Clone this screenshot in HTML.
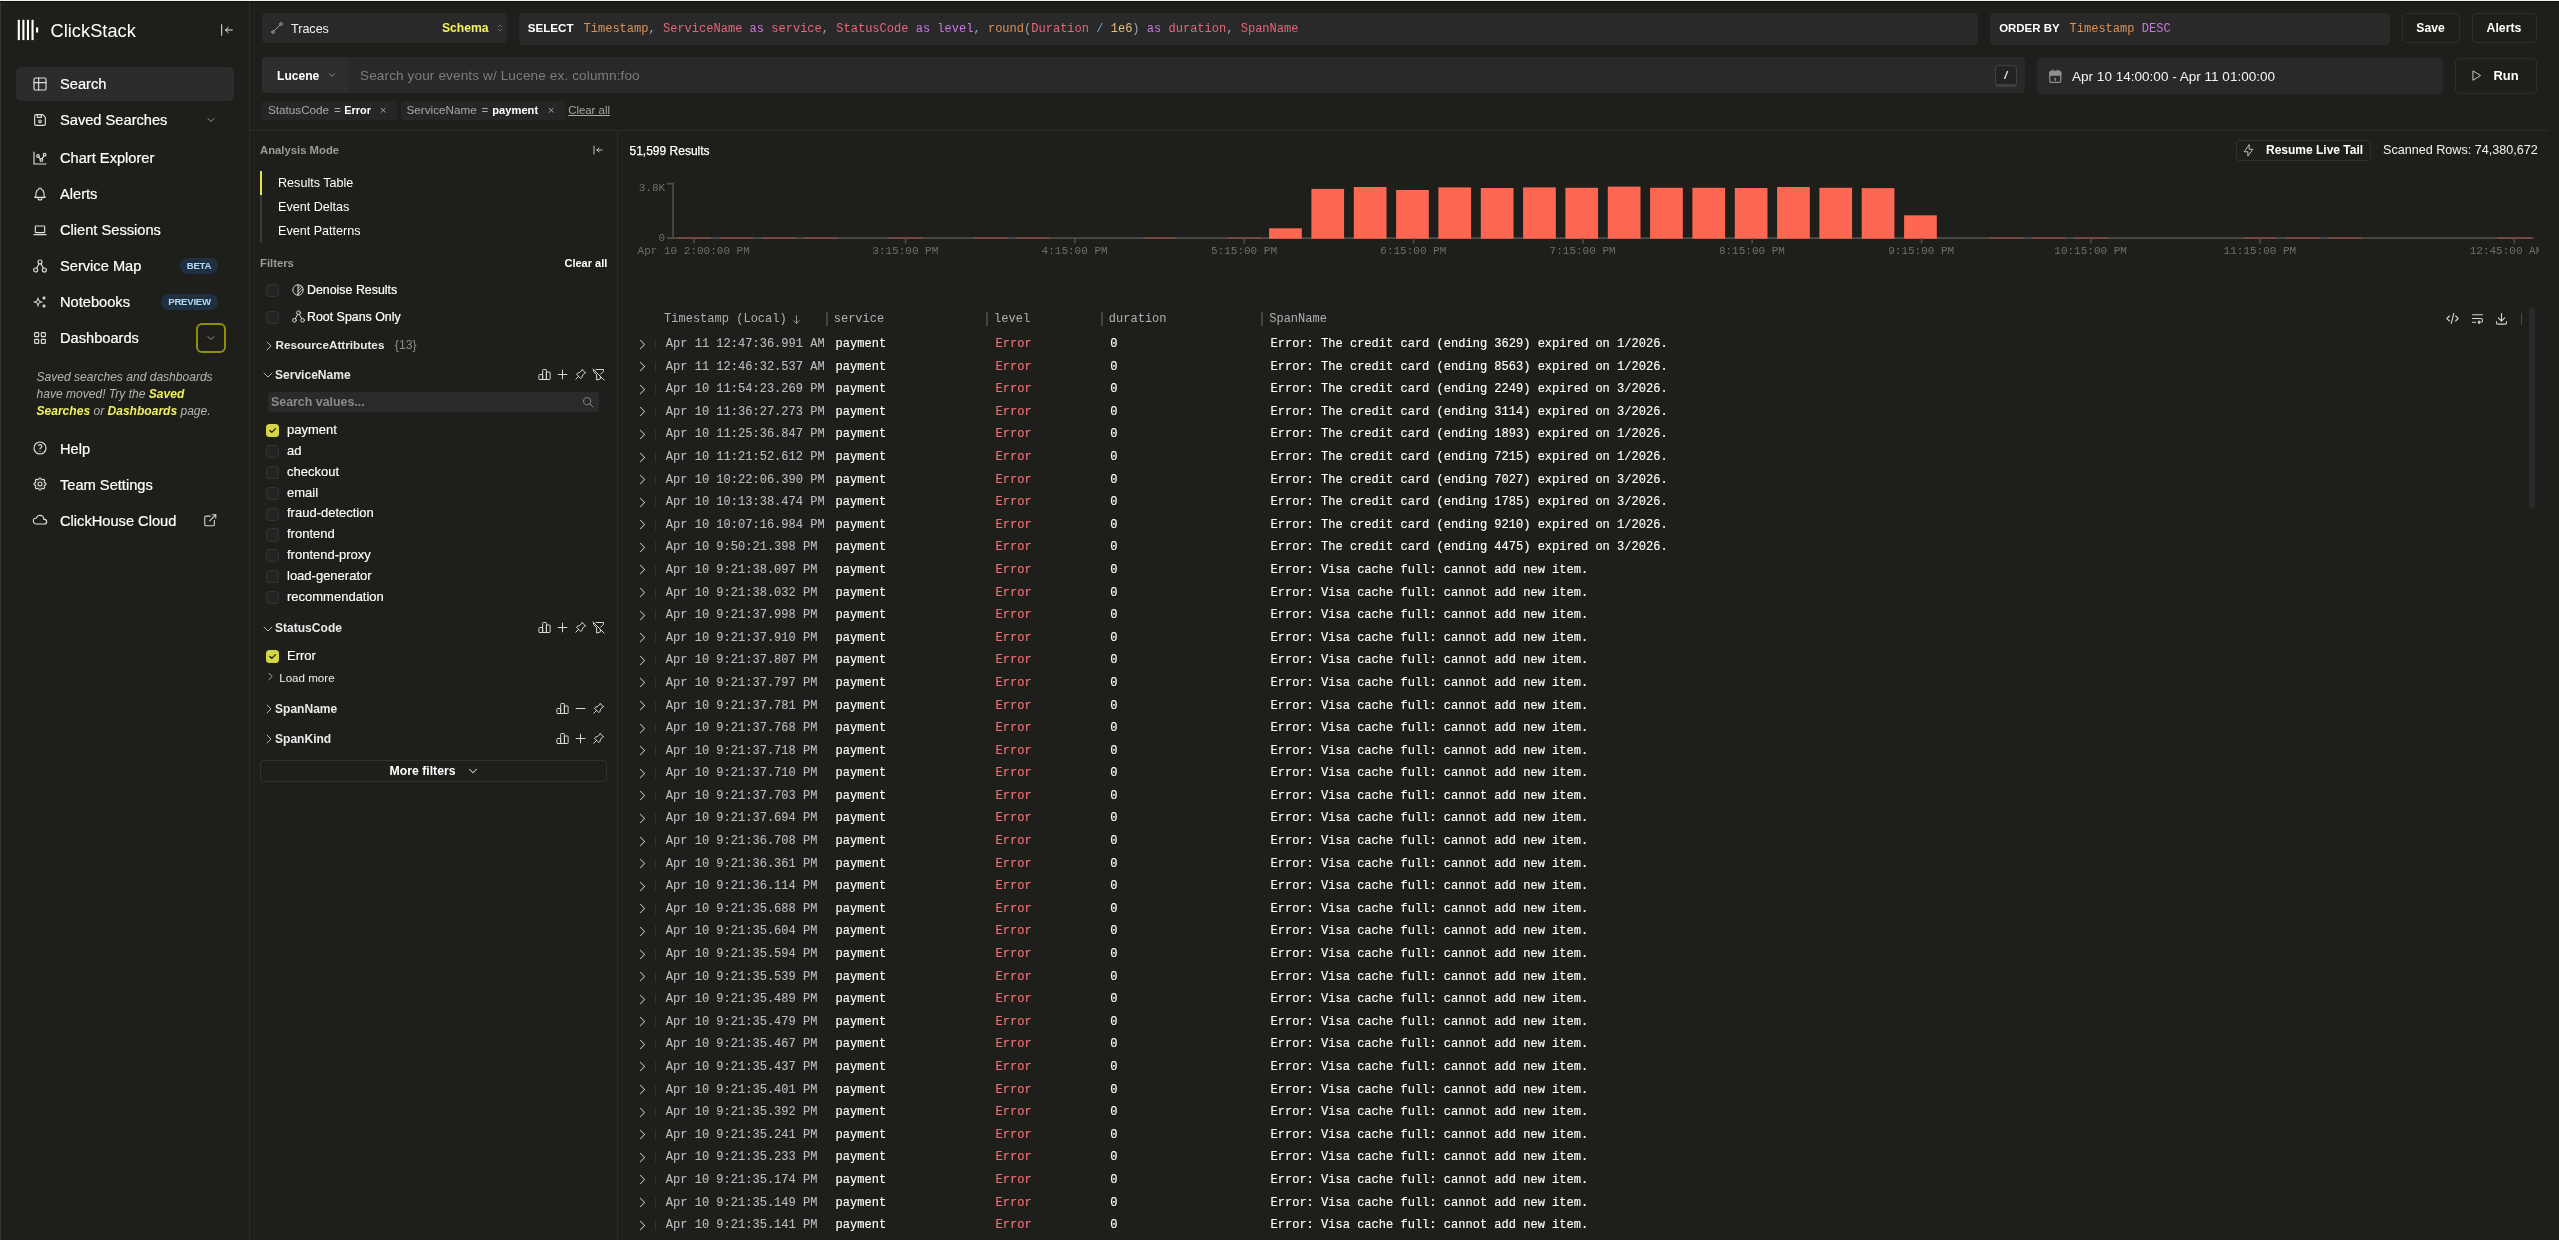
<!DOCTYPE html>
<html lang="en"><head><meta charset="utf-8"><title>ClickStack - Search</title>
<style>
*{box-sizing:border-box;margin:0;padding:0}
html,body{width:2559px;height:1240px;overflow:hidden;background:#1e1f1a}
body{position:relative;font-family:"Liberation Sans",sans-serif;color:#fff;font-size:12px}
#root{position:absolute;left:0;top:0;width:2559px;height:1240px;will-change:transform}
.t{position:absolute;white-space:pre}
.b{position:absolute}
.i{position:absolute;overflow:visible}
.m{font-family:"Liberation Mono",monospace}
.nav{font-size:14.65px;color:#fff;-webkit-text-stroke:0.2px #fff}
.bd{font-weight:700}
</style></head>
<body>
<div id="root">
<div class="b" style="left:0px;top:0px;width:2559px;height:1px;background:#eff1ed"></div>
<div class="b" style="left:0px;top:1px;width:2559px;height:1px;background:#11120d"></div>
<div class="b" style="left:0px;top:2px;width:1px;height:1238px;background:#373833"></div>
<div class="b" style="left:249px;top:1px;width:1px;height:1239px;background:#2b2c29"></div>
<svg class="i" style="left:0;top:0;width:60px;height:60px" viewBox="0 0 60 60"><rect x="17.75" y="19.8" width="2.1" height="20.3" fill="#fff"/><rect x="22.35" y="19.8" width="2.1" height="20.3" fill="#fff"/><rect x="26.9" y="19.8" width="2.1" height="20.3" fill="#fff"/><rect x="31.5" y="19.8" width="2.1" height="20.3" fill="#fff"/><rect x="36.05" y="27.4" width="2.1" height="5.1" fill="#fff"/></svg>
<span class="t" style="left:50.5px;top:18.5px;line-height:24px;font-size:18.2px;color:#fff;letter-spacing:0.05px">ClickStack</span>
<svg class="i" style="left:219px;top:22px;width:16px;height:16px;" viewBox="0 0 24 24" fill="none" stroke="#e6e6e6" stroke-width="1.5" stroke-linecap="round" stroke-linejoin="round"><path d="M10 12l10 0"/><path d="M10 12l4 4"/><path d="M10 12l4 -4"/><path d="M4 4l0 16"/></svg>
<div class="b" style="left:16px;top:67px;width:218px;height:34px;background:#2c2c2c;border-radius:5px"></div>
<svg class="i" style="left:32.1px;top:75.9px;width:16px;height:16px;" viewBox="0 0 24 24" fill="none" stroke="#dedede" stroke-width="1.7" stroke-linecap="round" stroke-linejoin="round"><path d="M3 5a2 2 0 0 1 2 -2h14a2 2 0 0 1 2 2v14a2 2 0 0 1 -2 2h-14a2 2 0 0 1 -2 -2v-14z"/><path d="M3 10h18"/><path d="M10 3v18"/></svg>
<span class="t nav" style="left:60px;top:74.0px;line-height:20px;">Search</span>
<svg class="i" style="left:32.1px;top:111.9px;width:16px;height:16px;" viewBox="0 0 24 24" fill="none" stroke="#dedede" stroke-width="1.7" stroke-linecap="round" stroke-linejoin="round"><path d="M6 4h10l4 4v10a2 2 0 0 1 -2 2h-12a2 2 0 0 1 -2 -2v-12a2 2 0 0 1 2 -2"/><path d="M12 14m-2 0a2 2 0 1 0 4 0a2 2 0 1 0 -4 0"/><path d="M14 4l0 4l-6 0l0 -4"/></svg>
<span class="t nav" style="left:60px;top:110.0px;line-height:20px;">Saved Searches</span>
<svg class="i" style="left:32.1px;top:149.9px;width:16px;height:16px;" viewBox="0 0 24 24" fill="none" stroke="#dedede" stroke-width="1.7" stroke-linecap="round" stroke-linejoin="round"><path d="M3 3v18h18"/><path d="M9 9m-2 0a2 2 0 1 0 4 0a2 2 0 1 0 -4 0"/><path d="M19 7m-2 0a2 2 0 1 0 4 0a2 2 0 1 0 -4 0"/><path d="M14 15m-2 0a2 2 0 1 0 4 0a2 2 0 1 0 -4 0"/><path d="M10.16 10.62l2.34 2.88"/><path d="M15.088 13.328l2.837 -4.586"/></svg>
<span class="t nav" style="left:60px;top:148.0px;line-height:20px;">Chart Explorer</span>
<svg class="i" style="left:32.1px;top:185.9px;width:16px;height:16px;" viewBox="0 0 24 24" fill="none" stroke="#dedede" stroke-width="1.7" stroke-linecap="round" stroke-linejoin="round"><path d="M10 5a2 2 0 1 1 4 0a7 7 0 0 1 4 6v3a4 4 0 0 0 2 3h-16a4 4 0 0 0 2 -3v-3a7 7 0 0 1 4 -6"/><path d="M9 17v1a3 3 0 0 0 6 0v-1"/></svg>
<span class="t nav" style="left:60px;top:184.0px;line-height:20px;">Alerts</span>
<svg class="i" style="left:32.1px;top:221.9px;width:16px;height:16px;" viewBox="0 0 24 24" fill="none" stroke="#dedede" stroke-width="1.7" stroke-linecap="round" stroke-linejoin="round"><path d="M3 19l18 0"/><path d="M5 6m0 1a1 1 0 0 1 1 -1h12a1 1 0 0 1 1 1v8a1 1 0 0 1 -1 1h-12a1 1 0 0 1 -1 -1z"/></svg>
<span class="t nav" style="left:60px;top:220.0px;line-height:20px;">Client Sessions</span>
<svg class="i" style="left:32.1px;top:257.9px;width:16px;height:16px;" viewBox="0 0 24 24" fill="none" stroke="#dedede" stroke-width="1.7" stroke-linecap="round" stroke-linejoin="round"><circle cx="12" cy="6" r="3"/><circle cx="5.5" cy="18" r="3"/><circle cx="18.5" cy="18" r="3"/><path d="M10.6 8.7l-3.6 6.6"/><path d="M13.4 8.7l3.6 6.6"/></svg>
<span class="t nav" style="left:60px;top:256.0px;line-height:20px;">Service Map</span>
<svg class="i" style="left:32.1px;top:293.9px;width:16px;height:16px;" viewBox="0 0 24 24" fill="none" stroke="#dedede" stroke-width="1.7" stroke-linecap="round" stroke-linejoin="round"><path d="M16 18a2 2 0 0 1 2 2a2 2 0 0 1 2 -2a2 2 0 0 1 -2 -2a2 2 0 0 1 -2 2zm0 -12a2 2 0 0 1 2 2a2 2 0 0 1 2 -2a2 2 0 0 1 -2 -2a2 2 0 0 1 -2 2zm-7 12a6 6 0 0 1 6 -6a6 6 0 0 1 -6 -6a6 6 0 0 1 -6 6a6 6 0 0 1 6 6z"/></svg>
<span class="t nav" style="left:60px;top:292.0px;line-height:20px;">Notebooks</span>
<svg class="i" style="left:32.1px;top:329.9px;width:16px;height:16px;" viewBox="0 0 24 24" fill="none" stroke="#dedede" stroke-width="1.7" stroke-linecap="round" stroke-linejoin="round"><path d="M4 4m0 1a1 1 0 0 1 1 -1h4a1 1 0 0 1 1 1v4a1 1 0 0 1 -1 1h-4a1 1 0 0 1 -1 -1z"/><path d="M14 4m0 1a1 1 0 0 1 1 -1h4a1 1 0 0 1 1 1v4a1 1 0 0 1 -1 1h-4a1 1 0 0 1 -1 -1z"/><path d="M4 14m0 1a1 1 0 0 1 1 -1h4a1 1 0 0 1 1 1v4a1 1 0 0 1 -1 1h-4a1 1 0 0 1 -1 -1z"/><path d="M14 14m0 1a1 1 0 0 1 1 -1h4a1 1 0 0 1 1 1v4a1 1 0 0 1 -1 1h-4a1 1 0 0 1 -1 -1z"/></svg>
<span class="t nav" style="left:60px;top:328.0px;line-height:20px;">Dashboards</span>
<svg class="i" style="left:32.1px;top:440.05px;width:16px;height:16px;" viewBox="0 0 24 24" fill="none" stroke="#dedede" stroke-width="1.7" stroke-linecap="round" stroke-linejoin="round"><path d="M12 12m-9 0a9 9 0 1 0 18 0a9 9 0 1 0 -18 0"/><path d="M12 17l0 .01"/><path d="M12 13.5a1.5 1.5 0 0 1 1 -1.5a2.6 2.6 0 1 0 -3 -4"/></svg>
<span class="t nav" style="left:60px;top:439.0px;line-height:20px;">Help</span>
<svg class="i" style="left:32.1px;top:476.05px;width:16px;height:16px;" viewBox="0 0 24 24" fill="none" stroke="#dedede" stroke-width="1.7" stroke-linecap="round" stroke-linejoin="round"><path d="M10.325 4.317c.426 -1.756 2.924 -1.756 3.35 0a1.724 1.724 0 0 0 2.573 1.066c1.543 -.94 3.31 .826 2.37 2.37a1.724 1.724 0 0 0 1.065 2.572c1.756 .426 1.756 2.924 0 3.35a1.724 1.724 0 0 0 -1.066 2.573c.94 1.543 -.826 3.31 -2.37 2.37a1.724 1.724 0 0 0 -2.572 1.065c-.426 1.756 -2.924 1.756 -3.35 0a1.724 1.724 0 0 0 -2.573 -1.066c-1.543 .94 -3.31 -.826 -2.37 -2.37a1.724 1.724 0 0 0 -1.065 -2.572c-1.756 -.426 -1.756 -2.924 0 -3.35a1.724 1.724 0 0 0 1.066 -2.573c-.94 -1.543 .826 -3.31 2.37 -2.37c1 .608 2.296 .07 2.572 -1.065z"/><path d="M9 12a3 3 0 1 0 6 0a3 3 0 0 0 -6 0"/></svg>
<span class="t nav" style="left:60px;top:475.0px;line-height:20px;">Team Settings</span>
<svg class="i" style="left:32.1px;top:512.05px;width:16px;height:16px;" viewBox="0 0 24 24" fill="none" stroke="#dedede" stroke-width="1.7" stroke-linecap="round" stroke-linejoin="round"><path d="M6.657 18c-2.572 0 -4.657 -2.007 -4.657 -4.483c0 -2.475 2.085 -4.482 4.657 -4.482c.393 -1.762 1.794 -3.2 3.675 -3.773c1.88 -.572 3.956 -.193 5.444 1c1.488 1.19 2.162 3.007 1.77 4.769h.99c1.913 0 3.464 1.56 3.464 3.486c0 1.927 -1.551 3.487 -3.465 3.487h-11.878"/></svg>
<span class="t nav" style="left:60px;top:511.0px;line-height:20px;">ClickHouse Cloud</span>
<svg class="i" style="left:205px;top:114px;width:12px;height:12px;" viewBox="0 0 24 24" fill="none" stroke="#9c9ca6" stroke-width="1.9" stroke-linecap="round" stroke-linejoin="round"><path d="M6 9l6 6l6 -6"/></svg>
<span class="t" style="left:180px;top:258px;width:38px;height:16px;line-height:16px;border-radius:8px;background:#1f3140;color:#b4d9f7;font-size:9.6px;font-weight:700;text-align:center;letter-spacing:-0.25px">BETA</span>
<span class="t" style="left:161px;top:294px;width:57px;height:16px;line-height:16px;border-radius:8px;background:#1f3140;color:#b4d9f7;font-size:9.6px;font-weight:700;text-align:center;letter-spacing:-0.25px">PREVIEW</span>
<div class="b" style="left:196px;top:322.8px;width:30px;height:30px;border:2px solid #8f900a;border-radius:6px"></div>
<svg class="i" style="left:205px;top:332px;width:12px;height:12px;" viewBox="0 0 24 24" fill="none" stroke="#9c9ca6" stroke-width="1.9" stroke-linecap="round" stroke-linejoin="round"><path d="M6 9l6 6l6 -6"/></svg>
<span class="t" style="left:36.5px;top:368.5px;line-height:17px;font-size:12.05px;font-style:italic;color:#b4b4b1">Saved searches and dashboards</span>
<span class="t" style="left:36.5px;top:385.5px;line-height:17px;font-size:12.05px;font-style:italic;color:#b4b4b1">have moved! Try the <b style="color:#f0f060">Saved</b></span>
<span class="t" style="left:36.5px;top:402.5px;line-height:17px;font-size:12.05px;font-style:italic;color:#b4b4b1"><b style="color:#f0f060">Searches</b> or <b style="color:#f0f060">Dashboards</b> page.</span>
<svg class="i" style="left:201.75px;top:512.25px;width:16.5px;height:16.5px;" viewBox="0 0 24 24" fill="none" stroke="#d0d0d0" stroke-width="1.6" stroke-linecap="round" stroke-linejoin="round"><path d="M12 6h-6a2 2 0 0 0 -2 2v10a2 2 0 0 0 2 2h10a2 2 0 0 0 2 -2v-6"/><path d="M11 13l9 -9"/><path d="M15 4h5v5"/></svg>
<div class="b" style="left:262px;top:13px;width:245px;height:30px;background:#292929;border-radius:4px"></div>
<svg class="i" style="left:268.9px;top:20px;width:16px;height:16px;" viewBox="0 0 24 24" fill="none" stroke="#9a9a9a" stroke-width="1.5" stroke-linecap="round" stroke-linejoin="round"><path d="M6 18m-2 0a2 2 0 1 0 4 0a2 2 0 1 0 -4 0"/><path d="M18 6m-2 0a2 2 0 1 0 4 0a2 2 0 1 0 -4 0"/><path d="M7.5 16.5l9 -9"/></svg>
<span class="t" style="left:291px;top:19.5px;line-height:18px;font-size:12.55px;color:#f2f2f2">Traces</span>
<span class="t" style="left:442px;top:19.0px;line-height:18px;font-size:12.15px;font-weight:700;color:#f4f45c">Schema</span>
<svg class="i" style="left:494.5px;top:23px;width:10px;height:10px;" viewBox="0 0 24 24" fill="none" stroke="#7d7d7d" stroke-width="1.8" stroke-linecap="round" stroke-linejoin="round"><path d="M8 9l4 -4l4 4"/><path d="M16 15l-4 4l-4 -4"/></svg>
<div class="b" style="left:518.5px;top:12.5px;width:1459.5px;height:32px;background:#292929;border-radius:4px"></div>
<span class="t" style="left:527.8px;top:19.0px;line-height:18px;font-size:11.6px;font-weight:700;color:#fff">SELECT</span>
<span class="t m" style="left:583.5px;top:19.7px;line-height:18px;font-size:12.04px"><span style="color:#d9935a">Timestamp</span><span style="color:#9da5b4">, </span><span style="color:#e8657c">ServiceName</span><span style="color:#c678dd"> as </span><span style="color:#e8657c">service</span><span style="color:#9da5b4">, </span><span style="color:#e8657c">StatusCode</span><span style="color:#c678dd"> as </span><span style="color:#c678dd">level</span><span style="color:#9da5b4">, </span><span style="color:#d9935a">round</span><span style="color:#9da5b4">(</span><span style="color:#e8657c">Duration</span><span style="color:#56b6c2"> / </span><span style="color:#e5c07b">1e6</span><span style="color:#9da5b4">)</span><span style="color:#c678dd"> as </span><span style="color:#e8657c">duration</span><span style="color:#9da5b4">, </span><span style="color:#e8657c">SpanName</span></span>
<div class="b" style="left:1990px;top:13px;width:399.5px;height:32px;background:#292929;border-radius:4px"></div>
<span class="t" style="left:1999.2px;top:19.0px;line-height:18px;font-size:11.45px;font-weight:700;color:#fff">ORDER BY</span>
<span class="t m" style="left:2069.5px;top:19.7px;line-height:18px;font-size:12.04px"><span style="color:#d9935a">Timestamp</span> <span style="color:#c678dd">DESC</span></span>
<div class="b" style="left:2401.5px;top:13px;width:58px;height:30px;border:1px solid #2d2d2c;border-radius:4px;background:#1e1f1a"></div>
<span class="t" style="left:2401.5px;top:19.0px;line-height:18px;font-size:12.2px;font-weight:700;width:58px;text-align:center">Save</span>
<div class="b" style="left:2471.5px;top:13px;width:65px;height:30px;border:1px solid #2d2d2c;border-radius:4px;background:#1e1f1a"></div>
<span class="t" style="left:2471.5px;top:19.0px;line-height:18px;font-size:12.3px;font-weight:700;width:65px;text-align:center">Alerts</span>
<div class="b" style="left:262px;top:57px;width:1763px;height:36px;background:#292929;border-radius:4px"></div>
<div class="b" style="left:262px;top:57px;width:86px;height:36px;background:#2d2d2d;border-radius:4px 0 0 4px"></div>
<span class="t" style="left:277px;top:66.6px;line-height:18px;font-size:12.1px;font-weight:700">Lucene</span>
<svg class="i" style="left:326.5px;top:69.5px;width:10px;height:10px;" viewBox="0 0 24 24" fill="none" stroke="#9a9a9a" stroke-width="2" stroke-linecap="round" stroke-linejoin="round"><path d="M6 9l6 6l6 -6"/></svg>
<span class="t" style="left:360px;top:66.5px;line-height:18px;font-size:13.6px;letter-spacing:0.11px;color:#7c7c7a">Search your events w/ Lucene ex. column:foo</span>
<div class="b" style="left:1995px;top:65px;width:22px;height:22px;border:1px solid #3f3f3f;border-bottom-width:3px;border-radius:4px;background:#232323"></div>
<span class="t" style="left:1995px;top:67.5px;line-height:14px;font-size:11px;font-weight:700;width:21.5px;text-align:center;color:#e8e8e8;font-style:italic">/</span>
<div class="b" style="left:2037px;top:58px;width:406px;height:36px;background:#292929;border-radius:4px"></div>
<svg class="i" style="left:2046.55px;top:67.65px;width:16.5px;height:16.5px" viewBox="0 0 24 24" fill="none" stroke="#8f8f8f" stroke-width="1.8" stroke-linecap="round" stroke-linejoin="round"><rect x="4" y="5" width="16" height="16" rx="2"/><path d="M4 10.5V7a2 2 0 0 1 2-2h12a2 2 0 0 1 2 2v3.5z" fill="#8f8f8f"/><path d="M16 3v3M8 3v3M11 15h1v3"/></svg>
<span class="t" style="left:2072px;top:67.6px;line-height:18px;font-size:13.56px;color:#f4f4f4">Apr 10 14:00:00 - Apr 11 01:00:00</span>
<div class="b" style="left:2454.5px;top:58px;width:82px;height:36px;border:1px solid #2d2d2c;border-radius:4px;background:#1e1f1a"></div>
<svg class="i" style="left:2469px;top:69.3px;width:13.5px;height:13.5px;" viewBox="0 0 24 24" fill="none" stroke="#d8d8d8" stroke-width="1.6" stroke-linecap="round" stroke-linejoin="round"><path d="M7 4v16l13 -8z"/></svg>
<span class="t" style="left:2493.5px;top:67.0px;line-height:18px;font-size:12.9px;font-weight:700">Run</span>
<div class="b" style="left:262px;top:101px;width:135px;height:19px;background:#262626;border-radius:3px"></div>
<span class="t" style="left:268px;top:102.8px;line-height:14px;font-size:11.7px;color:#a8a8a6">StatusCode</span>
<span class="t" style="left:334px;top:102.8px;line-height:14px;font-size:11.7px;color:#a8a8a6">=</span>
<span class="t" style="left:344.3px;top:102.8px;line-height:14px;font-size:10.9px;font-weight:700">Error</span>
<svg class="i" style="left:379.3px;top:106.4px;width:8.5px;height:8.5px;" viewBox="0 0 24 24" fill="none" stroke="#b4b4b4" stroke-width="2.4" stroke-linecap="round" stroke-linejoin="round"><path d="M18 6l-12 12"/><path d="M6 6l12 12"/></svg>
<div class="b" style="left:400.5px;top:101px;width:164px;height:19px;background:#262626;border-radius:3px"></div>
<span class="t" style="left:406.5px;top:102.8px;line-height:14px;font-size:11.7px;color:#a8a8a6">ServiceName</span>
<span class="t" style="left:481.6px;top:102.8px;line-height:14px;font-size:11.7px;color:#a8a8a6">=</span>
<span class="t" style="left:492.3px;top:102.8px;line-height:14px;font-size:11.15px;font-weight:700">payment</span>
<svg class="i" style="left:547.2px;top:106.4px;width:8.5px;height:8.5px;" viewBox="0 0 24 24" fill="none" stroke="#b4b4b4" stroke-width="2.4" stroke-linecap="round" stroke-linejoin="round"><path d="M18 6l-12 12"/><path d="M6 6l12 12"/></svg>
<span class="t" style="left:568.2px;top:102.8px;line-height:14px;font-size:11.4px;color:#a8a8a6;text-decoration:underline">Clear all</span>
<div class="b" style="left:250px;top:130px;width:2299px;height:1px;background:#2b2c29"></div>
<div class="b" style="left:617px;top:131px;width:1px;height:1109px;background:#2b2c29"></div>
<span class="t" style="left:260px;top:143.0px;line-height:14px;font-size:11.3px;font-weight:700;color:#9b9b98">Analysis Mode</span>
<svg class="i" style="left:591.5px;top:144px;width:12px;height:12px;" viewBox="0 0 24 24" fill="none" stroke="#d0d0d0" stroke-width="1.8" stroke-linecap="round" stroke-linejoin="round"><path d="M10 12l10 0"/><path d="M10 12l4 4"/><path d="M10 12l4 -4"/><path d="M4 4l0 16"/></svg>
<div class="b" style="left:260.3px;top:171px;width:1.6px;height:71.5px;background:#3a3a38"></div>
<div class="b" style="left:260px;top:171px;width:2px;height:24px;background:#e4e44e"></div>
<span class="t" style="left:278px;top:174.5px;line-height:16px;font-size:12.6px">Results Table</span>
<span class="t" style="left:278px;top:198.5px;line-height:16px;font-size:12.6px">Event Deltas</span>
<span class="t" style="left:278px;top:222.5px;line-height:16px;font-size:12.6px">Event Patterns</span>
<span class="t" style="left:260px;top:256.0px;line-height:14px;font-size:11.3px;font-weight:700;color:#9b9b98">Filters</span>
<span class="t" style="left:564.5px;top:256.0px;line-height:14px;font-size:11px;font-weight:700;color:#fff">Clear all</span>
<div class="b" style="left:265.7px;top:284.0px;width:13.2px;height:13.2px;border:1px solid #343434;border-radius:3.5px;background:#242424"></div>
<svg class="i" style="left:291px;top:283px;width:14px;height:14px;" viewBox="0 0 24 24" fill="none" stroke="#d8d8d8" stroke-width="1.6" stroke-linecap="round" stroke-linejoin="round"><path d="M12 12m-9 0a9 9 0 1 0 18 0a9 9 0 1 0 -18 0"/><path d="M12 3v18"/><path d="M12 14l7 -7"/><path d="M12 19l8.5 -8.5"/><path d="M12 9l4.5 -4.5"/></svg>
<span class="t" style="left:307px;top:282.0px;line-height:16px;font-size:12.4px;-webkit-text-stroke:0.2px #fff">Denoise Results</span>
<div class="b" style="left:265.7px;top:310.7px;width:13.2px;height:13.2px;border:1px solid #343434;border-radius:3.5px;background:#242424"></div>
<svg class="i" style="left:290.5px;top:309.3px;width:15px;height:15px;" viewBox="0 0 24 24" fill="none" stroke="#d8d8d8" stroke-width="1.6" stroke-linecap="round" stroke-linejoin="round"><circle cx="12" cy="6" r="3"/><circle cx="5.5" cy="18" r="3"/><circle cx="18.5" cy="18" r="3"/><path d="M10.6 8.7l-3.6 6.6"/><path d="M13.4 8.7l3.6 6.6"/></svg>
<span class="t" style="left:307px;top:308.7px;line-height:16px;font-size:12.4px;-webkit-text-stroke:0.2px #fff">Root Spans Only</span>
<svg class="i" style="left:260.5px;top:337.8px;width:16px;height:16px;" viewBox="0 0 24 24" fill="none" stroke="#b4b4b4" stroke-width="1.5" stroke-linecap="round" stroke-linejoin="round"><path d="M9 6l6 6l-6 6"/></svg>
<span class="t" style="left:275.4px;top:336.9px;line-height:16px;font-size:11.75px;font-weight:700;color:#e9e9e9">ResourceAttributes</span>
<span class="t" style="left:394.8px;top:336.9px;line-height:16px;font-size:12.3px;color:#8c8c8a">{13}</span>
<svg class="i" style="left:259.5px;top:367px;width:16px;height:16px;" viewBox="0 0 24 24" fill="none" stroke="#b4b4b4" stroke-width="1.5" stroke-linecap="round" stroke-linejoin="round"><path d="M6 9l6 6l6 -6"/></svg>
<span class="t" style="left:275px;top:366.5px;line-height:16px;font-size:12.05px;font-weight:700;color:#e9e9e9">ServiceName</span>
<svg class="i" style="left:536.5px;top:366.8px;width:15px;height:15px;" viewBox="0 0 24 24" fill="none" stroke="#dcdcdc" stroke-width="1.55" stroke-linecap="round" stroke-linejoin="round"><path d="M3 13a1 1 0 0 1 1 -1h4a1 1 0 0 1 1 1v6a1 1 0 0 1 -1 1h-4a1 1 0 0 1 -1 -1z"/><path d="M15 9a1 1 0 0 1 1 -1h4a1 1 0 0 1 1 1v10a1 1 0 0 1 -1 1h-4a1 1 0 0 1 -1 -1z"/><path d="M9 5a1 1 0 0 1 1 -1h4a1 1 0 0 1 1 1v14a1 1 0 0 1 -1 1h-4a1 1 0 0 1 -1 -1z"/><path d="M4 20h14"/></svg>
<svg class="i" style="left:554.5px;top:366.8px;width:15px;height:15px;" viewBox="0 0 24 24" fill="none" stroke="#dcdcdc" stroke-width="1.55" stroke-linecap="round" stroke-linejoin="round"><path d="M12 5l0 14"/><path d="M5 12l14 0"/></svg>
<svg class="i" style="left:572.5px;top:366.8px;width:15px;height:15px;" viewBox="0 0 24 24" fill="none" stroke="#dcdcdc" stroke-width="1.55" stroke-linecap="round" stroke-linejoin="round"><path d="M15 4.5l-4 4l-4 1.5l-1.5 1.5l7 7l1.5 -1.5l1.5 -4l4 -4"/><path d="M9 15l-4.5 4.5"/><path d="M14.5 4l5.5 5.5"/></svg>
<svg class="i" style="left:590.5px;top:366.8px;width:15px;height:15px;" viewBox="0 0 24 24" fill="none" stroke="#dcdcdc" stroke-width="1.55" stroke-linecap="round" stroke-linejoin="round"><path d="M8 4h12v2.172a2 2 0 0 1 -.586 1.414l-3.914 3.914m-.5 3.5v4l-6 2v-8.5l-4.48 -4.928a2 2 0 0 1 -.52 -1.345v-2.227"/><path d="M3 3l18 18"/></svg>
<div class="b" style="left:267.5px;top:392px;width:331.5px;height:20px;background:#2a2a2a;border-radius:3px"></div>
<span class="t" style="left:271px;top:394.5px;line-height:14px;font-size:12.4px;font-weight:700;color:#8a8a88">Search values...</span>
<svg class="i" style="left:581.6px;top:395.7px;width:12.5px;height:12.5px;" viewBox="0 0 24 24" fill="none" stroke="#8a8a88" stroke-width="1.8" stroke-linecap="round" stroke-linejoin="round"><path d="M10 10m-7 0a7 7 0 1 0 14 0a7 7 0 1 0 -14 0"/><path d="M21 21l-6 -6"/></svg>
<div class="b" style="left:265.7px;top:424.15px;width:13.2px;height:13.2px;background:#d4d548;border-radius:3.5px"></div>
<svg class="i" style="left:267.8px;top:426.25px;width:9px;height:9px;" viewBox="0 0 24 24" fill="none" stroke="#1d1e1b" stroke-width="3.4" stroke-linecap="round" stroke-linejoin="round"><path d="M5 12l5 5l10 -10"/></svg>
<span class="t" style="left:287px;top:422.05px;line-height:16px;font-size:13px;-webkit-text-stroke:0.15px #fff">payment</span>
<div class="b" style="left:265.7px;top:444.98999999999995px;width:13.2px;height:13.2px;border:1px solid #343434;border-radius:3.5px;background:#242424"></div>
<span class="t" style="left:287px;top:442.89px;line-height:16px;font-size:13px;-webkit-text-stroke:0.15px #fff">ad</span>
<div class="b" style="left:265.7px;top:465.83px;width:13.2px;height:13.2px;border:1px solid #343434;border-radius:3.5px;background:#242424"></div>
<span class="t" style="left:287px;top:463.73px;line-height:16px;font-size:13px;-webkit-text-stroke:0.15px #fff">checkout</span>
<div class="b" style="left:265.7px;top:486.66999999999996px;width:13.2px;height:13.2px;border:1px solid #343434;border-radius:3.5px;background:#242424"></div>
<span class="t" style="left:287px;top:484.57px;line-height:16px;font-size:13px;-webkit-text-stroke:0.15px #fff">email</span>
<div class="b" style="left:265.7px;top:507.51px;width:13.2px;height:13.2px;border:1px solid #343434;border-radius:3.5px;background:#242424"></div>
<span class="t" style="left:287px;top:505.40999999999997px;line-height:16px;font-size:13px;-webkit-text-stroke:0.15px #fff">fraud-detection</span>
<div class="b" style="left:265.7px;top:528.35px;width:13.2px;height:13.2px;border:1px solid #343434;border-radius:3.5px;background:#242424"></div>
<span class="t" style="left:287px;top:526.25px;line-height:16px;font-size:13px;-webkit-text-stroke:0.15px #fff">frontend</span>
<div class="b" style="left:265.7px;top:549.1899999999999px;width:13.2px;height:13.2px;border:1px solid #343434;border-radius:3.5px;background:#242424"></div>
<span class="t" style="left:287px;top:547.0899999999999px;line-height:16px;font-size:13px;-webkit-text-stroke:0.15px #fff">frontend-proxy</span>
<div class="b" style="left:265.7px;top:570.03px;width:13.2px;height:13.2px;border:1px solid #343434;border-radius:3.5px;background:#242424"></div>
<span class="t" style="left:287px;top:567.93px;line-height:16px;font-size:13px;-webkit-text-stroke:0.15px #fff">load-generator</span>
<div class="b" style="left:265.7px;top:590.87px;width:13.2px;height:13.2px;border:1px solid #343434;border-radius:3.5px;background:#242424"></div>
<span class="t" style="left:287px;top:588.77px;line-height:16px;font-size:13px;-webkit-text-stroke:0.15px #fff">recommendation</span>
<svg class="i" style="left:259.5px;top:621.2px;width:16px;height:16px;" viewBox="0 0 24 24" fill="none" stroke="#b4b4b4" stroke-width="1.5" stroke-linecap="round" stroke-linejoin="round"><path d="M6 9l6 6l6 -6"/></svg>
<span class="t" style="left:275px;top:620.0px;line-height:16px;font-size:12.05px;font-weight:700;color:#e9e9e9">StatusCode</span>
<svg class="i" style="left:536.5px;top:620.3px;width:15px;height:15px;" viewBox="0 0 24 24" fill="none" stroke="#dcdcdc" stroke-width="1.55" stroke-linecap="round" stroke-linejoin="round"><path d="M3 13a1 1 0 0 1 1 -1h4a1 1 0 0 1 1 1v6a1 1 0 0 1 -1 1h-4a1 1 0 0 1 -1 -1z"/><path d="M15 9a1 1 0 0 1 1 -1h4a1 1 0 0 1 1 1v10a1 1 0 0 1 -1 1h-4a1 1 0 0 1 -1 -1z"/><path d="M9 5a1 1 0 0 1 1 -1h4a1 1 0 0 1 1 1v14a1 1 0 0 1 -1 1h-4a1 1 0 0 1 -1 -1z"/><path d="M4 20h14"/></svg>
<svg class="i" style="left:554.5px;top:620.3px;width:15px;height:15px;" viewBox="0 0 24 24" fill="none" stroke="#dcdcdc" stroke-width="1.55" stroke-linecap="round" stroke-linejoin="round"><path d="M12 5l0 14"/><path d="M5 12l14 0"/></svg>
<svg class="i" style="left:572.5px;top:620.3px;width:15px;height:15px;" viewBox="0 0 24 24" fill="none" stroke="#dcdcdc" stroke-width="1.55" stroke-linecap="round" stroke-linejoin="round"><path d="M15 4.5l-4 4l-4 1.5l-1.5 1.5l7 7l1.5 -1.5l1.5 -4l4 -4"/><path d="M9 15l-4.5 4.5"/><path d="M14.5 4l5.5 5.5"/></svg>
<svg class="i" style="left:590.5px;top:620.3px;width:15px;height:15px;" viewBox="0 0 24 24" fill="none" stroke="#dcdcdc" stroke-width="1.55" stroke-linecap="round" stroke-linejoin="round"><path d="M8 4h12v2.172a2 2 0 0 1 -.586 1.414l-3.914 3.914m-.5 3.5v4l-6 2v-8.5l-4.48 -4.928a2 2 0 0 1 -.52 -1.345v-2.227"/><path d="M3 3l18 18"/></svg>
<div class="b" style="left:265.7px;top:650.0px;width:13.2px;height:13.2px;background:#d4d548;border-radius:3.5px"></div>
<svg class="i" style="left:267.8px;top:652.1px;width:9px;height:9px;" viewBox="0 0 24 24" fill="none" stroke="#1d1e1b" stroke-width="3.4" stroke-linecap="round" stroke-linejoin="round"><path d="M5 12l5 5l10 -10"/></svg>
<span class="t" style="left:287px;top:647.9px;line-height:16px;font-size:13px;-webkit-text-stroke:0.15px #fff">Error</span>
<svg class="i" style="left:263.5px;top:669.8px;width:13px;height:13px;" viewBox="0 0 24 24" fill="none" stroke="#b8b8b8" stroke-width="1.7" stroke-linecap="round" stroke-linejoin="round"><path d="M9 6l6 6l-6 6"/></svg>
<span class="t" style="left:279.2px;top:671.0px;line-height:14px;font-size:11.6px;color:#f0f0f0">Load more</span>
<svg class="i" style="left:260.5px;top:701.1px;width:16px;height:16px;" viewBox="0 0 24 24" fill="none" stroke="#b4b4b4" stroke-width="1.5" stroke-linecap="round" stroke-linejoin="round"><path d="M9 6l6 6l-6 6"/></svg>
<span class="t" style="left:275px;top:700.7px;line-height:16px;font-size:12.05px;font-weight:700;color:#e9e9e9">SpanName</span>
<svg class="i" style="left:554.5px;top:700.8px;width:15px;height:15px;" viewBox="0 0 24 24" fill="none" stroke="#dcdcdc" stroke-width="1.55" stroke-linecap="round" stroke-linejoin="round"><path d="M3 13a1 1 0 0 1 1 -1h4a1 1 0 0 1 1 1v6a1 1 0 0 1 -1 1h-4a1 1 0 0 1 -1 -1z"/><path d="M15 9a1 1 0 0 1 1 -1h4a1 1 0 0 1 1 1v10a1 1 0 0 1 -1 1h-4a1 1 0 0 1 -1 -1z"/><path d="M9 5a1 1 0 0 1 1 -1h4a1 1 0 0 1 1 1v14a1 1 0 0 1 -1 1h-4a1 1 0 0 1 -1 -1z"/><path d="M4 20h14"/></svg>
<svg class="i" style="left:572.5px;top:700.8px;width:15px;height:15px;" viewBox="0 0 24 24" fill="none" stroke="#dcdcdc" stroke-width="1.55" stroke-linecap="round" stroke-linejoin="round"><path d="M5 12l14 0"/></svg>
<svg class="i" style="left:590.5px;top:700.8px;width:15px;height:15px;" viewBox="0 0 24 24" fill="none" stroke="#dcdcdc" stroke-width="1.55" stroke-linecap="round" stroke-linejoin="round"><path d="M15 4.5l-4 4l-4 1.5l-1.5 1.5l7 7l1.5 -1.5l1.5 -4l4 -4"/><path d="M9 15l-4.5 4.5"/><path d="M14.5 4l5.5 5.5"/></svg>
<svg class="i" style="left:260.5px;top:731.1px;width:16px;height:16px;" viewBox="0 0 24 24" fill="none" stroke="#b4b4b4" stroke-width="1.5" stroke-linecap="round" stroke-linejoin="round"><path d="M9 6l6 6l-6 6"/></svg>
<span class="t" style="left:275px;top:730.7px;line-height:16px;font-size:12.05px;font-weight:700;color:#e9e9e9">SpanKind</span>
<svg class="i" style="left:554.5px;top:730.8px;width:15px;height:15px;" viewBox="0 0 24 24" fill="none" stroke="#dcdcdc" stroke-width="1.55" stroke-linecap="round" stroke-linejoin="round"><path d="M3 13a1 1 0 0 1 1 -1h4a1 1 0 0 1 1 1v6a1 1 0 0 1 -1 1h-4a1 1 0 0 1 -1 -1z"/><path d="M15 9a1 1 0 0 1 1 -1h4a1 1 0 0 1 1 1v10a1 1 0 0 1 -1 1h-4a1 1 0 0 1 -1 -1z"/><path d="M9 5a1 1 0 0 1 1 -1h4a1 1 0 0 1 1 1v14a1 1 0 0 1 -1 1h-4a1 1 0 0 1 -1 -1z"/><path d="M4 20h14"/></svg>
<svg class="i" style="left:572.5px;top:730.8px;width:15px;height:15px;" viewBox="0 0 24 24" fill="none" stroke="#dcdcdc" stroke-width="1.55" stroke-linecap="round" stroke-linejoin="round"><path d="M12 5l0 14"/><path d="M5 12l14 0"/></svg>
<svg class="i" style="left:590.5px;top:730.8px;width:15px;height:15px;" viewBox="0 0 24 24" fill="none" stroke="#dcdcdc" stroke-width="1.55" stroke-linecap="round" stroke-linejoin="round"><path d="M15 4.5l-4 4l-4 1.5l-1.5 1.5l7 7l1.5 -1.5l1.5 -4l4 -4"/><path d="M9 15l-4.5 4.5"/><path d="M14.5 4l5.5 5.5"/></svg>
<div class="b" style="left:260px;top:760px;width:347px;height:22px;border:1px solid #30302e;border-radius:3px"></div>
<span class="t" style="left:389.5px;top:763.0px;line-height:16px;font-size:12.25px;font-weight:700">More filters</span>
<svg class="i" style="left:465.75px;top:764px;width:14px;height:14px;" viewBox="0 0 24 24" fill="none" stroke="#d0d0d0" stroke-width="1.8" stroke-linecap="round" stroke-linejoin="round"><path d="M6 9l6 6l6 -6"/></svg>
<span class="t" style="left:629.5px;top:142.5px;line-height:16px;font-size:12px;-webkit-text-stroke:0.25px #fff">51,599 Results</span>
<div class="b" style="left:2236px;top:139.5px;width:134.5px;height:21.5px;border:1px solid #30302e;border-radius:3px"></div>
<svg class="i" style="left:2241.2px;top:142.6px;width:15px;height:15px;" viewBox="0 0 24 24" fill="none" stroke="#c8c8c8" stroke-width="1.5" stroke-linecap="round" stroke-linejoin="round"><path d="M13 3l0 7l6 0l-8 11l0 -7l-6 0l8 -11"/></svg>
<span class="t" style="left:2266px;top:142.0px;line-height:16px;font-size:12px;font-weight:700">Resume Live Tail</span>
<span class="t" style="left:2383px;top:142.0px;line-height:16px;font-size:12.6px;color:#f2f2f2">Scanned Rows: 74,380,672</span>
<svg class="i" style="left:0;top:131px;width:2559px;height:140px" viewBox="0 131 2559 140"><path d="M667 183.6H673.1V238.1M667 238.1H2533.8" fill="none" stroke="#4e4e4c" stroke-width="1.6"/><rect x="1269.1" y="228.3" width="32.7" height="10.4" fill="#fe6852"/><rect x="1311.4" y="188.9" width="32.7" height="49.8" fill="#fe6852"/><rect x="1353.8" y="187" width="32.7" height="51.7" fill="#fe6852"/><rect x="1396.1" y="190" width="32.7" height="48.7" fill="#fe6852"/><rect x="1438.4" y="187.4" width="32.7" height="51.3" fill="#fe6852"/><rect x="1480.8" y="188" width="32.7" height="50.7" fill="#fe6852"/><rect x="1523.1" y="187.4" width="32.7" height="51.3" fill="#fe6852"/><rect x="1565.4" y="187.8" width="32.7" height="50.9" fill="#fe6852"/><rect x="1607.8" y="186.6" width="32.7" height="52.1" fill="#fe6852"/><rect x="1650.1" y="187.8" width="32.7" height="50.9" fill="#fe6852"/><rect x="1692.4" y="187.8" width="32.7" height="50.9" fill="#fe6852"/><rect x="1734.8" y="188" width="32.7" height="50.7" fill="#fe6852"/><rect x="1777.1" y="187" width="32.7" height="51.7" fill="#fe6852"/><rect x="1819.4" y="187.8" width="32.7" height="50.9" fill="#fe6852"/><rect x="1861.7" y="188.1" width="32.7" height="50.6" fill="#fe6852"/><rect x="1904.1" y="215.3" width="32.7" height="23.4" fill="#fe6852"/><rect x="677.3" y="237.55" width="33.6" height="1" fill="#a94c3e"/><rect x="719.6" y="237.55" width="33.6" height="1" fill="#a94c3e"/><rect x="762.0" y="237.55" width="33.6" height="1" fill="#a94c3e"/><rect x="804.3" y="237.55" width="33.6" height="1" fill="#a94c3e"/><rect x="888.9" y="237.55" width="33.6" height="1" fill="#a94c3e"/><rect x="973.6" y="237.55" width="33.6" height="1" fill="#a94c3e"/><rect x="1015.9" y="237.55" width="33.6" height="1" fill="#a94c3e"/><rect x="1142.9" y="237.55" width="33.6" height="1" fill="#a94c3e"/><rect x="1227.6" y="237.55" width="33.6" height="1" fill="#a94c3e"/><rect x="1989.5" y="237.55" width="33.6" height="1" fill="#a94c3e"/><rect x="2031.9" y="237.55" width="33.6" height="1" fill="#a94c3e"/><rect x="2074.2" y="237.55" width="33.6" height="1" fill="#a94c3e"/><rect x="2243.5" y="237.55" width="33.6" height="1" fill="#a94c3e"/><rect x="2285.8" y="237.55" width="33.6" height="1" fill="#a94c3e"/><rect x="2328.2" y="237.55" width="33.6" height="1" fill="#a94c3e"/><rect x="2497.5" y="237.55" width="33.6" height="1" fill="#a94c3e"/><path d="M694.0 238V243.6" stroke="#4e4e4c" stroke-width="1.5"/><path d="M905.6 238V243.6" stroke="#4e4e4c" stroke-width="1.5"/><path d="M1074.9 238V243.6" stroke="#4e4e4c" stroke-width="1.5"/><path d="M1244.3 238V243.6" stroke="#4e4e4c" stroke-width="1.5"/><path d="M1413.6 238V243.6" stroke="#4e4e4c" stroke-width="1.5"/><path d="M1582.9 238V243.6" stroke="#4e4e4c" stroke-width="1.5"/><path d="M1752.2 238V243.6" stroke="#4e4e4c" stroke-width="1.5"/><path d="M1921.5 238V243.6" stroke="#4e4e4c" stroke-width="1.5"/><path d="M2090.9 238V243.6" stroke="#4e4e4c" stroke-width="1.5"/><path d="M2260.2 238V243.6" stroke="#4e4e4c" stroke-width="1.5"/><path d="M2514.2 238V243.6" stroke="#4e4e4c" stroke-width="1.5"/></svg>
<div class="b" style="left:618px;top:131px;width:1921px;height:140px;overflow:hidden">
<span class="t m" style="left:19.6px;top:112.80000000000001px;line-height:14px;font-size:11px;color:#6e6e6c">Apr 10 2:00:00 PM</span>
<span class="t m" style="left:254.3px;top:112.80000000000001px;line-height:14px;font-size:11px;color:#6e6e6c">3:15:00 PM</span>
<span class="t m" style="left:423.6px;top:112.80000000000001px;line-height:14px;font-size:11px;color:#6e6e6c">4:15:00 PM</span>
<span class="t m" style="left:593.0px;top:112.80000000000001px;line-height:14px;font-size:11px;color:#6e6e6c">5:15:00 PM</span>
<span class="t m" style="left:762.3px;top:112.80000000000001px;line-height:14px;font-size:11px;color:#6e6e6c">6:15:00 PM</span>
<span class="t m" style="left:931.6px;top:112.80000000000001px;line-height:14px;font-size:11px;color:#6e6e6c">7:15:00 PM</span>
<span class="t m" style="left:1100.9px;top:112.80000000000001px;line-height:14px;font-size:11px;color:#6e6e6c">8:15:00 PM</span>
<span class="t m" style="left:1270.2px;top:112.80000000000001px;line-height:14px;font-size:11px;color:#6e6e6c">9:15:00 PM</span>
<span class="t m" style="left:1436.3px;top:112.80000000000001px;line-height:14px;font-size:11px;color:#6e6e6c">10:15:00 PM</span>
<span class="t m" style="left:1605.6px;top:112.80000000000001px;line-height:14px;font-size:11px;color:#6e6e6c">11:15:00 PM</span>
<span class="t m" style="left:1851.7px;top:112.80000000000001px;line-height:14px;font-size:11px;color:#6e6e6c">12:45:00 AM</span>
<span class="t m" style="left:20.700000000000045px;top:49.80000000000001px;line-height:14px;font-size:11px;color:#6e6e6c">3.8K</span>
<span class="t m" style="left:40.5px;top:100.19999999999999px;line-height:14px;font-size:11px;color:#6e6e6c">0</span>
</div>
<span class="t m" style="left:664px;top:311.0px;line-height:16px;font-size:12.04px;color:#afafb4">Timestamp (Local)</span>
<svg class="i" style="left:789.7px;top:312.6px;width:13px;height:13px" viewBox="0 0 24 24" fill="none" stroke="#afafb4" stroke-width="1.55" stroke-linecap="round" stroke-linejoin="round"><path d="M12 5v14M7 14l5 5l5-5"/></svg>
<div class="b" style="left:825.9000000000001px;top:312px;width:2px;height:14px;background:#454543"></div>
<span class="t m" style="left:833.7px;top:311.0px;line-height:16px;font-size:12.04px;color:#afafb4">service</span>
<div class="b" style="left:986.2px;top:312px;width:2px;height:14px;background:#454543"></div>
<span class="t m" style="left:994px;top:311.0px;line-height:16px;font-size:12.04px;color:#afafb4">level</span>
<div class="b" style="left:1101.0px;top:312px;width:2px;height:14px;background:#454543"></div>
<span class="t m" style="left:1108.8px;top:311.0px;line-height:16px;font-size:12.04px;color:#afafb4">duration</span>
<div class="b" style="left:1261.4px;top:312px;width:2px;height:14px;background:#454543"></div>
<span class="t m" style="left:1269.2px;top:311.0px;line-height:16px;font-size:12.04px;color:#afafb4">SpanName</span>
<svg class="i" style="left:2445.3px;top:311.2px;width:15px;height:15px;" viewBox="0 0 24 24" fill="none" stroke="#d4d4d4" stroke-width="1.7" stroke-linecap="round" stroke-linejoin="round"><path d="M7 8l-4 4l4 4"/><path d="M17 8l4 4l-4 4"/><path d="M14 4l-4 16"/></svg>
<svg class="i" style="left:2469.6px;top:311.2px;width:15px;height:15px;" viewBox="0 0 24 24" fill="none" stroke="#d4d4d4" stroke-width="1.7" stroke-linecap="round" stroke-linejoin="round"><path d="M4 6l16 0"/><path d="M4 18l5 0"/><path d="M4 12h13a3 3 0 0 1 0 6h-4l2 -2m0 4l-2 -2"/></svg>
<svg class="i" style="left:2493.5px;top:311.2px;width:15px;height:15px;" viewBox="0 0 24 24" fill="none" stroke="#d4d4d4" stroke-width="1.7" stroke-linecap="round" stroke-linejoin="round"><path d="M4 17v2a2 2 0 0 0 2 2h12a2 2 0 0 0 2 -2v-2"/><path d="M7 11l5 5l5 -5"/><path d="M12 4l0 12"/></svg>
<div class="b" style="left:2520.5px;top:313px;width:1.2px;height:12px;background:#4a4a48"></div>
<div class="b" style="left:2529px;top:308px;width:6.3px;height:201px;background:#2b2b2d;border-radius:3.2px"></div>
<svg class="i" style="left:634.3px;top:335.6px;width:17px;height:17px;" viewBox="0 0 24 24" fill="none" stroke="#bfc0c4" stroke-width="1.45" stroke-linecap="round" stroke-linejoin="round"><path d="M9 6l6 6l-6 6"/></svg>
<div class="b" style="left:655px;top:339.1px;width:1px;height:10px;background:#303032"></div>
<span class="t m" style="left:665.8px;top:336.1px;line-height:16px;font-size:12.04px;color:#b9b9bf;-webkit-text-stroke:0.12px #b9b9bf">Apr 11 12:47:36.991 AM</span>
<span class="t m" style="left:835.6px;top:336.1px;line-height:16px;font-size:12.04px;color:#fff;-webkit-text-stroke:0.14px #fff">payment</span>
<span class="t m" style="left:995.5px;top:336.1px;line-height:16px;font-size:12.04px;color:#f27178;-webkit-text-stroke:0.12px #f27178">Error</span>
<span class="t m" style="left:1110.3px;top:336.1px;line-height:16px;font-size:12.04px;color:#fff;-webkit-text-stroke:0.14px #fff">0</span>
<span class="t m" style="left:1270.5px;top:336.1px;line-height:16px;font-size:12.04px;color:#fff;-webkit-text-stroke:0.14px #fff">Error: The credit card (ending 3629) expired on 1/2026.</span>
<svg class="i" style="left:634.3px;top:358.1897435897436px;width:17px;height:17px;" viewBox="0 0 24 24" fill="none" stroke="#bfc0c4" stroke-width="1.45" stroke-linecap="round" stroke-linejoin="round"><path d="M9 6l6 6l-6 6"/></svg>
<div class="b" style="left:655px;top:361.6897435897436px;width:1px;height:10px;background:#303032"></div>
<span class="t m" style="left:665.8px;top:358.6897435897436px;line-height:16px;font-size:12.04px;color:#b9b9bf;-webkit-text-stroke:0.12px #b9b9bf">Apr 11 12:46:32.537 AM</span>
<span class="t m" style="left:835.6px;top:358.6897435897436px;line-height:16px;font-size:12.04px;color:#fff;-webkit-text-stroke:0.14px #fff">payment</span>
<span class="t m" style="left:995.5px;top:358.6897435897436px;line-height:16px;font-size:12.04px;color:#f27178;-webkit-text-stroke:0.12px #f27178">Error</span>
<span class="t m" style="left:1110.3px;top:358.6897435897436px;line-height:16px;font-size:12.04px;color:#fff;-webkit-text-stroke:0.14px #fff">0</span>
<span class="t m" style="left:1270.5px;top:358.6897435897436px;line-height:16px;font-size:12.04px;color:#fff;-webkit-text-stroke:0.14px #fff">Error: The credit card (ending 8563) expired on 1/2026.</span>
<svg class="i" style="left:634.3px;top:380.7794871794872px;width:17px;height:17px;" viewBox="0 0 24 24" fill="none" stroke="#bfc0c4" stroke-width="1.45" stroke-linecap="round" stroke-linejoin="round"><path d="M9 6l6 6l-6 6"/></svg>
<div class="b" style="left:655px;top:384.2794871794872px;width:1px;height:10px;background:#303032"></div>
<span class="t m" style="left:665.8px;top:381.2794871794872px;line-height:16px;font-size:12.04px;color:#b9b9bf;-webkit-text-stroke:0.12px #b9b9bf">Apr 10 11:54:23.269 PM</span>
<span class="t m" style="left:835.6px;top:381.2794871794872px;line-height:16px;font-size:12.04px;color:#fff;-webkit-text-stroke:0.14px #fff">payment</span>
<span class="t m" style="left:995.5px;top:381.2794871794872px;line-height:16px;font-size:12.04px;color:#f27178;-webkit-text-stroke:0.12px #f27178">Error</span>
<span class="t m" style="left:1110.3px;top:381.2794871794872px;line-height:16px;font-size:12.04px;color:#fff;-webkit-text-stroke:0.14px #fff">0</span>
<span class="t m" style="left:1270.5px;top:381.2794871794872px;line-height:16px;font-size:12.04px;color:#fff;-webkit-text-stroke:0.14px #fff">Error: The credit card (ending 2249) expired on 3/2026.</span>
<svg class="i" style="left:634.3px;top:403.3692307692308px;width:17px;height:17px;" viewBox="0 0 24 24" fill="none" stroke="#bfc0c4" stroke-width="1.45" stroke-linecap="round" stroke-linejoin="round"><path d="M9 6l6 6l-6 6"/></svg>
<div class="b" style="left:655px;top:406.8692307692308px;width:1px;height:10px;background:#303032"></div>
<span class="t m" style="left:665.8px;top:403.8692307692308px;line-height:16px;font-size:12.04px;color:#b9b9bf;-webkit-text-stroke:0.12px #b9b9bf">Apr 10 11:36:27.273 PM</span>
<span class="t m" style="left:835.6px;top:403.8692307692308px;line-height:16px;font-size:12.04px;color:#fff;-webkit-text-stroke:0.14px #fff">payment</span>
<span class="t m" style="left:995.5px;top:403.8692307692308px;line-height:16px;font-size:12.04px;color:#f27178;-webkit-text-stroke:0.12px #f27178">Error</span>
<span class="t m" style="left:1110.3px;top:403.8692307692308px;line-height:16px;font-size:12.04px;color:#fff;-webkit-text-stroke:0.14px #fff">0</span>
<span class="t m" style="left:1270.5px;top:403.8692307692308px;line-height:16px;font-size:12.04px;color:#fff;-webkit-text-stroke:0.14px #fff">Error: The credit card (ending 3114) expired on 3/2026.</span>
<svg class="i" style="left:634.3px;top:425.9589743589744px;width:17px;height:17px;" viewBox="0 0 24 24" fill="none" stroke="#bfc0c4" stroke-width="1.45" stroke-linecap="round" stroke-linejoin="round"><path d="M9 6l6 6l-6 6"/></svg>
<div class="b" style="left:655px;top:429.4589743589744px;width:1px;height:10px;background:#303032"></div>
<span class="t m" style="left:665.8px;top:426.4589743589744px;line-height:16px;font-size:12.04px;color:#b9b9bf;-webkit-text-stroke:0.12px #b9b9bf">Apr 10 11:25:36.847 PM</span>
<span class="t m" style="left:835.6px;top:426.4589743589744px;line-height:16px;font-size:12.04px;color:#fff;-webkit-text-stroke:0.14px #fff">payment</span>
<span class="t m" style="left:995.5px;top:426.4589743589744px;line-height:16px;font-size:12.04px;color:#f27178;-webkit-text-stroke:0.12px #f27178">Error</span>
<span class="t m" style="left:1110.3px;top:426.4589743589744px;line-height:16px;font-size:12.04px;color:#fff;-webkit-text-stroke:0.14px #fff">0</span>
<span class="t m" style="left:1270.5px;top:426.4589743589744px;line-height:16px;font-size:12.04px;color:#fff;-webkit-text-stroke:0.14px #fff">Error: The credit card (ending 1893) expired on 1/2026.</span>
<svg class="i" style="left:634.3px;top:448.548717948718px;width:17px;height:17px;" viewBox="0 0 24 24" fill="none" stroke="#bfc0c4" stroke-width="1.45" stroke-linecap="round" stroke-linejoin="round"><path d="M9 6l6 6l-6 6"/></svg>
<div class="b" style="left:655px;top:452.048717948718px;width:1px;height:10px;background:#303032"></div>
<span class="t m" style="left:665.8px;top:449.048717948718px;line-height:16px;font-size:12.04px;color:#b9b9bf;-webkit-text-stroke:0.12px #b9b9bf">Apr 10 11:21:52.612 PM</span>
<span class="t m" style="left:835.6px;top:449.048717948718px;line-height:16px;font-size:12.04px;color:#fff;-webkit-text-stroke:0.14px #fff">payment</span>
<span class="t m" style="left:995.5px;top:449.048717948718px;line-height:16px;font-size:12.04px;color:#f27178;-webkit-text-stroke:0.12px #f27178">Error</span>
<span class="t m" style="left:1110.3px;top:449.048717948718px;line-height:16px;font-size:12.04px;color:#fff;-webkit-text-stroke:0.14px #fff">0</span>
<span class="t m" style="left:1270.5px;top:449.048717948718px;line-height:16px;font-size:12.04px;color:#fff;-webkit-text-stroke:0.14px #fff">Error: The credit card (ending 7215) expired on 1/2026.</span>
<svg class="i" style="left:634.3px;top:471.13846153846157px;width:17px;height:17px;" viewBox="0 0 24 24" fill="none" stroke="#bfc0c4" stroke-width="1.45" stroke-linecap="round" stroke-linejoin="round"><path d="M9 6l6 6l-6 6"/></svg>
<div class="b" style="left:655px;top:474.63846153846157px;width:1px;height:10px;background:#303032"></div>
<span class="t m" style="left:665.8px;top:471.63846153846157px;line-height:16px;font-size:12.04px;color:#b9b9bf;-webkit-text-stroke:0.12px #b9b9bf">Apr 10 10:22:06.390 PM</span>
<span class="t m" style="left:835.6px;top:471.63846153846157px;line-height:16px;font-size:12.04px;color:#fff;-webkit-text-stroke:0.14px #fff">payment</span>
<span class="t m" style="left:995.5px;top:471.63846153846157px;line-height:16px;font-size:12.04px;color:#f27178;-webkit-text-stroke:0.12px #f27178">Error</span>
<span class="t m" style="left:1110.3px;top:471.63846153846157px;line-height:16px;font-size:12.04px;color:#fff;-webkit-text-stroke:0.14px #fff">0</span>
<span class="t m" style="left:1270.5px;top:471.63846153846157px;line-height:16px;font-size:12.04px;color:#fff;-webkit-text-stroke:0.14px #fff">Error: The credit card (ending 7027) expired on 3/2026.</span>
<svg class="i" style="left:634.3px;top:493.72820512820516px;width:17px;height:17px;" viewBox="0 0 24 24" fill="none" stroke="#bfc0c4" stroke-width="1.45" stroke-linecap="round" stroke-linejoin="round"><path d="M9 6l6 6l-6 6"/></svg>
<div class="b" style="left:655px;top:497.22820512820516px;width:1px;height:10px;background:#303032"></div>
<span class="t m" style="left:665.8px;top:494.22820512820516px;line-height:16px;font-size:12.04px;color:#b9b9bf;-webkit-text-stroke:0.12px #b9b9bf">Apr 10 10:13:38.474 PM</span>
<span class="t m" style="left:835.6px;top:494.22820512820516px;line-height:16px;font-size:12.04px;color:#fff;-webkit-text-stroke:0.14px #fff">payment</span>
<span class="t m" style="left:995.5px;top:494.22820512820516px;line-height:16px;font-size:12.04px;color:#f27178;-webkit-text-stroke:0.12px #f27178">Error</span>
<span class="t m" style="left:1110.3px;top:494.22820512820516px;line-height:16px;font-size:12.04px;color:#fff;-webkit-text-stroke:0.14px #fff">0</span>
<span class="t m" style="left:1270.5px;top:494.22820512820516px;line-height:16px;font-size:12.04px;color:#fff;-webkit-text-stroke:0.14px #fff">Error: The credit card (ending 1785) expired on 3/2026.</span>
<svg class="i" style="left:634.3px;top:516.3179487179488px;width:17px;height:17px;" viewBox="0 0 24 24" fill="none" stroke="#bfc0c4" stroke-width="1.45" stroke-linecap="round" stroke-linejoin="round"><path d="M9 6l6 6l-6 6"/></svg>
<div class="b" style="left:655px;top:519.8179487179488px;width:1px;height:10px;background:#303032"></div>
<span class="t m" style="left:665.8px;top:516.8179487179488px;line-height:16px;font-size:12.04px;color:#b9b9bf;-webkit-text-stroke:0.12px #b9b9bf">Apr 10 10:07:16.984 PM</span>
<span class="t m" style="left:835.6px;top:516.8179487179488px;line-height:16px;font-size:12.04px;color:#fff;-webkit-text-stroke:0.14px #fff">payment</span>
<span class="t m" style="left:995.5px;top:516.8179487179488px;line-height:16px;font-size:12.04px;color:#f27178;-webkit-text-stroke:0.12px #f27178">Error</span>
<span class="t m" style="left:1110.3px;top:516.8179487179488px;line-height:16px;font-size:12.04px;color:#fff;-webkit-text-stroke:0.14px #fff">0</span>
<span class="t m" style="left:1270.5px;top:516.8179487179488px;line-height:16px;font-size:12.04px;color:#fff;-webkit-text-stroke:0.14px #fff">Error: The credit card (ending 9210) expired on 1/2026.</span>
<svg class="i" style="left:634.3px;top:538.9076923076923px;width:17px;height:17px;" viewBox="0 0 24 24" fill="none" stroke="#bfc0c4" stroke-width="1.45" stroke-linecap="round" stroke-linejoin="round"><path d="M9 6l6 6l-6 6"/></svg>
<div class="b" style="left:655px;top:542.4076923076923px;width:1px;height:10px;background:#303032"></div>
<span class="t m" style="left:665.8px;top:539.4076923076923px;line-height:16px;font-size:12.04px;color:#b9b9bf;-webkit-text-stroke:0.12px #b9b9bf">Apr 10 9:50:21.398 PM</span>
<span class="t m" style="left:835.6px;top:539.4076923076923px;line-height:16px;font-size:12.04px;color:#fff;-webkit-text-stroke:0.14px #fff">payment</span>
<span class="t m" style="left:995.5px;top:539.4076923076923px;line-height:16px;font-size:12.04px;color:#f27178;-webkit-text-stroke:0.12px #f27178">Error</span>
<span class="t m" style="left:1110.3px;top:539.4076923076923px;line-height:16px;font-size:12.04px;color:#fff;-webkit-text-stroke:0.14px #fff">0</span>
<span class="t m" style="left:1270.5px;top:539.4076923076923px;line-height:16px;font-size:12.04px;color:#fff;-webkit-text-stroke:0.14px #fff">Error: The credit card (ending 4475) expired on 3/2026.</span>
<svg class="i" style="left:634.3px;top:561.4974358974359px;width:17px;height:17px;" viewBox="0 0 24 24" fill="none" stroke="#bfc0c4" stroke-width="1.45" stroke-linecap="round" stroke-linejoin="round"><path d="M9 6l6 6l-6 6"/></svg>
<div class="b" style="left:655px;top:564.9974358974359px;width:1px;height:10px;background:#303032"></div>
<span class="t m" style="left:665.8px;top:561.9974358974359px;line-height:16px;font-size:12.04px;color:#b9b9bf;-webkit-text-stroke:0.12px #b9b9bf">Apr 10 9:21:38.097 PM</span>
<span class="t m" style="left:835.6px;top:561.9974358974359px;line-height:16px;font-size:12.04px;color:#fff;-webkit-text-stroke:0.14px #fff">payment</span>
<span class="t m" style="left:995.5px;top:561.9974358974359px;line-height:16px;font-size:12.04px;color:#f27178;-webkit-text-stroke:0.12px #f27178">Error</span>
<span class="t m" style="left:1110.3px;top:561.9974358974359px;line-height:16px;font-size:12.04px;color:#fff;-webkit-text-stroke:0.14px #fff">0</span>
<span class="t m" style="left:1270.5px;top:561.9974358974359px;line-height:16px;font-size:12.04px;color:#fff;-webkit-text-stroke:0.14px #fff">Error: Visa cache full: cannot add new item.</span>
<svg class="i" style="left:634.3px;top:584.0871794871796px;width:17px;height:17px;" viewBox="0 0 24 24" fill="none" stroke="#bfc0c4" stroke-width="1.45" stroke-linecap="round" stroke-linejoin="round"><path d="M9 6l6 6l-6 6"/></svg>
<div class="b" style="left:655px;top:587.5871794871796px;width:1px;height:10px;background:#303032"></div>
<span class="t m" style="left:665.8px;top:584.5871794871796px;line-height:16px;font-size:12.04px;color:#b9b9bf;-webkit-text-stroke:0.12px #b9b9bf">Apr 10 9:21:38.032 PM</span>
<span class="t m" style="left:835.6px;top:584.5871794871796px;line-height:16px;font-size:12.04px;color:#fff;-webkit-text-stroke:0.14px #fff">payment</span>
<span class="t m" style="left:995.5px;top:584.5871794871796px;line-height:16px;font-size:12.04px;color:#f27178;-webkit-text-stroke:0.12px #f27178">Error</span>
<span class="t m" style="left:1110.3px;top:584.5871794871796px;line-height:16px;font-size:12.04px;color:#fff;-webkit-text-stroke:0.14px #fff">0</span>
<span class="t m" style="left:1270.5px;top:584.5871794871796px;line-height:16px;font-size:12.04px;color:#fff;-webkit-text-stroke:0.14px #fff">Error: Visa cache full: cannot add new item.</span>
<svg class="i" style="left:634.3px;top:606.6769230769231px;width:17px;height:17px;" viewBox="0 0 24 24" fill="none" stroke="#bfc0c4" stroke-width="1.45" stroke-linecap="round" stroke-linejoin="round"><path d="M9 6l6 6l-6 6"/></svg>
<div class="b" style="left:655px;top:610.1769230769231px;width:1px;height:10px;background:#303032"></div>
<span class="t m" style="left:665.8px;top:607.1769230769231px;line-height:16px;font-size:12.04px;color:#b9b9bf;-webkit-text-stroke:0.12px #b9b9bf">Apr 10 9:21:37.998 PM</span>
<span class="t m" style="left:835.6px;top:607.1769230769231px;line-height:16px;font-size:12.04px;color:#fff;-webkit-text-stroke:0.14px #fff">payment</span>
<span class="t m" style="left:995.5px;top:607.1769230769231px;line-height:16px;font-size:12.04px;color:#f27178;-webkit-text-stroke:0.12px #f27178">Error</span>
<span class="t m" style="left:1110.3px;top:607.1769230769231px;line-height:16px;font-size:12.04px;color:#fff;-webkit-text-stroke:0.14px #fff">0</span>
<span class="t m" style="left:1270.5px;top:607.1769230769231px;line-height:16px;font-size:12.04px;color:#fff;-webkit-text-stroke:0.14px #fff">Error: Visa cache full: cannot add new item.</span>
<svg class="i" style="left:634.3px;top:629.2666666666667px;width:17px;height:17px;" viewBox="0 0 24 24" fill="none" stroke="#bfc0c4" stroke-width="1.45" stroke-linecap="round" stroke-linejoin="round"><path d="M9 6l6 6l-6 6"/></svg>
<div class="b" style="left:655px;top:632.7666666666667px;width:1px;height:10px;background:#303032"></div>
<span class="t m" style="left:665.8px;top:629.7666666666667px;line-height:16px;font-size:12.04px;color:#b9b9bf;-webkit-text-stroke:0.12px #b9b9bf">Apr 10 9:21:37.910 PM</span>
<span class="t m" style="left:835.6px;top:629.7666666666667px;line-height:16px;font-size:12.04px;color:#fff;-webkit-text-stroke:0.14px #fff">payment</span>
<span class="t m" style="left:995.5px;top:629.7666666666667px;line-height:16px;font-size:12.04px;color:#f27178;-webkit-text-stroke:0.12px #f27178">Error</span>
<span class="t m" style="left:1110.3px;top:629.7666666666667px;line-height:16px;font-size:12.04px;color:#fff;-webkit-text-stroke:0.14px #fff">0</span>
<span class="t m" style="left:1270.5px;top:629.7666666666667px;line-height:16px;font-size:12.04px;color:#fff;-webkit-text-stroke:0.14px #fff">Error: Visa cache full: cannot add new item.</span>
<svg class="i" style="left:634.3px;top:651.8564102564103px;width:17px;height:17px;" viewBox="0 0 24 24" fill="none" stroke="#bfc0c4" stroke-width="1.45" stroke-linecap="round" stroke-linejoin="round"><path d="M9 6l6 6l-6 6"/></svg>
<div class="b" style="left:655px;top:655.3564102564103px;width:1px;height:10px;background:#303032"></div>
<span class="t m" style="left:665.8px;top:652.3564102564103px;line-height:16px;font-size:12.04px;color:#b9b9bf;-webkit-text-stroke:0.12px #b9b9bf">Apr 10 9:21:37.807 PM</span>
<span class="t m" style="left:835.6px;top:652.3564102564103px;line-height:16px;font-size:12.04px;color:#fff;-webkit-text-stroke:0.14px #fff">payment</span>
<span class="t m" style="left:995.5px;top:652.3564102564103px;line-height:16px;font-size:12.04px;color:#f27178;-webkit-text-stroke:0.12px #f27178">Error</span>
<span class="t m" style="left:1110.3px;top:652.3564102564103px;line-height:16px;font-size:12.04px;color:#fff;-webkit-text-stroke:0.14px #fff">0</span>
<span class="t m" style="left:1270.5px;top:652.3564102564103px;line-height:16px;font-size:12.04px;color:#fff;-webkit-text-stroke:0.14px #fff">Error: Visa cache full: cannot add new item.</span>
<svg class="i" style="left:634.3px;top:674.446153846154px;width:17px;height:17px;" viewBox="0 0 24 24" fill="none" stroke="#bfc0c4" stroke-width="1.45" stroke-linecap="round" stroke-linejoin="round"><path d="M9 6l6 6l-6 6"/></svg>
<div class="b" style="left:655px;top:677.946153846154px;width:1px;height:10px;background:#303032"></div>
<span class="t m" style="left:665.8px;top:674.946153846154px;line-height:16px;font-size:12.04px;color:#b9b9bf;-webkit-text-stroke:0.12px #b9b9bf">Apr 10 9:21:37.797 PM</span>
<span class="t m" style="left:835.6px;top:674.946153846154px;line-height:16px;font-size:12.04px;color:#fff;-webkit-text-stroke:0.14px #fff">payment</span>
<span class="t m" style="left:995.5px;top:674.946153846154px;line-height:16px;font-size:12.04px;color:#f27178;-webkit-text-stroke:0.12px #f27178">Error</span>
<span class="t m" style="left:1110.3px;top:674.946153846154px;line-height:16px;font-size:12.04px;color:#fff;-webkit-text-stroke:0.14px #fff">0</span>
<span class="t m" style="left:1270.5px;top:674.946153846154px;line-height:16px;font-size:12.04px;color:#fff;-webkit-text-stroke:0.14px #fff">Error: Visa cache full: cannot add new item.</span>
<svg class="i" style="left:634.3px;top:697.0358974358975px;width:17px;height:17px;" viewBox="0 0 24 24" fill="none" stroke="#bfc0c4" stroke-width="1.45" stroke-linecap="round" stroke-linejoin="round"><path d="M9 6l6 6l-6 6"/></svg>
<div class="b" style="left:655px;top:700.5358974358975px;width:1px;height:10px;background:#303032"></div>
<span class="t m" style="left:665.8px;top:697.5358974358975px;line-height:16px;font-size:12.04px;color:#b9b9bf;-webkit-text-stroke:0.12px #b9b9bf">Apr 10 9:21:37.781 PM</span>
<span class="t m" style="left:835.6px;top:697.5358974358975px;line-height:16px;font-size:12.04px;color:#fff;-webkit-text-stroke:0.14px #fff">payment</span>
<span class="t m" style="left:995.5px;top:697.5358974358975px;line-height:16px;font-size:12.04px;color:#f27178;-webkit-text-stroke:0.12px #f27178">Error</span>
<span class="t m" style="left:1110.3px;top:697.5358974358975px;line-height:16px;font-size:12.04px;color:#fff;-webkit-text-stroke:0.14px #fff">0</span>
<span class="t m" style="left:1270.5px;top:697.5358974358975px;line-height:16px;font-size:12.04px;color:#fff;-webkit-text-stroke:0.14px #fff">Error: Visa cache full: cannot add new item.</span>
<svg class="i" style="left:634.3px;top:719.625641025641px;width:17px;height:17px;" viewBox="0 0 24 24" fill="none" stroke="#bfc0c4" stroke-width="1.45" stroke-linecap="round" stroke-linejoin="round"><path d="M9 6l6 6l-6 6"/></svg>
<div class="b" style="left:655px;top:723.125641025641px;width:1px;height:10px;background:#303032"></div>
<span class="t m" style="left:665.8px;top:720.125641025641px;line-height:16px;font-size:12.04px;color:#b9b9bf;-webkit-text-stroke:0.12px #b9b9bf">Apr 10 9:21:37.768 PM</span>
<span class="t m" style="left:835.6px;top:720.125641025641px;line-height:16px;font-size:12.04px;color:#fff;-webkit-text-stroke:0.14px #fff">payment</span>
<span class="t m" style="left:995.5px;top:720.125641025641px;line-height:16px;font-size:12.04px;color:#f27178;-webkit-text-stroke:0.12px #f27178">Error</span>
<span class="t m" style="left:1110.3px;top:720.125641025641px;line-height:16px;font-size:12.04px;color:#fff;-webkit-text-stroke:0.14px #fff">0</span>
<span class="t m" style="left:1270.5px;top:720.125641025641px;line-height:16px;font-size:12.04px;color:#fff;-webkit-text-stroke:0.14px #fff">Error: Visa cache full: cannot add new item.</span>
<svg class="i" style="left:634.3px;top:742.2153846153847px;width:17px;height:17px;" viewBox="0 0 24 24" fill="none" stroke="#bfc0c4" stroke-width="1.45" stroke-linecap="round" stroke-linejoin="round"><path d="M9 6l6 6l-6 6"/></svg>
<div class="b" style="left:655px;top:745.7153846153847px;width:1px;height:10px;background:#303032"></div>
<span class="t m" style="left:665.8px;top:742.7153846153847px;line-height:16px;font-size:12.04px;color:#b9b9bf;-webkit-text-stroke:0.12px #b9b9bf">Apr 10 9:21:37.718 PM</span>
<span class="t m" style="left:835.6px;top:742.7153846153847px;line-height:16px;font-size:12.04px;color:#fff;-webkit-text-stroke:0.14px #fff">payment</span>
<span class="t m" style="left:995.5px;top:742.7153846153847px;line-height:16px;font-size:12.04px;color:#f27178;-webkit-text-stroke:0.12px #f27178">Error</span>
<span class="t m" style="left:1110.3px;top:742.7153846153847px;line-height:16px;font-size:12.04px;color:#fff;-webkit-text-stroke:0.14px #fff">0</span>
<span class="t m" style="left:1270.5px;top:742.7153846153847px;line-height:16px;font-size:12.04px;color:#fff;-webkit-text-stroke:0.14px #fff">Error: Visa cache full: cannot add new item.</span>
<svg class="i" style="left:634.3px;top:764.8051282051283px;width:17px;height:17px;" viewBox="0 0 24 24" fill="none" stroke="#bfc0c4" stroke-width="1.45" stroke-linecap="round" stroke-linejoin="round"><path d="M9 6l6 6l-6 6"/></svg>
<div class="b" style="left:655px;top:768.3051282051283px;width:1px;height:10px;background:#303032"></div>
<span class="t m" style="left:665.8px;top:765.3051282051283px;line-height:16px;font-size:12.04px;color:#b9b9bf;-webkit-text-stroke:0.12px #b9b9bf">Apr 10 9:21:37.710 PM</span>
<span class="t m" style="left:835.6px;top:765.3051282051283px;line-height:16px;font-size:12.04px;color:#fff;-webkit-text-stroke:0.14px #fff">payment</span>
<span class="t m" style="left:995.5px;top:765.3051282051283px;line-height:16px;font-size:12.04px;color:#f27178;-webkit-text-stroke:0.12px #f27178">Error</span>
<span class="t m" style="left:1110.3px;top:765.3051282051283px;line-height:16px;font-size:12.04px;color:#fff;-webkit-text-stroke:0.14px #fff">0</span>
<span class="t m" style="left:1270.5px;top:765.3051282051283px;line-height:16px;font-size:12.04px;color:#fff;-webkit-text-stroke:0.14px #fff">Error: Visa cache full: cannot add new item.</span>
<svg class="i" style="left:634.3px;top:787.3948717948718px;width:17px;height:17px;" viewBox="0 0 24 24" fill="none" stroke="#bfc0c4" stroke-width="1.45" stroke-linecap="round" stroke-linejoin="round"><path d="M9 6l6 6l-6 6"/></svg>
<div class="b" style="left:655px;top:790.8948717948718px;width:1px;height:10px;background:#303032"></div>
<span class="t m" style="left:665.8px;top:787.8948717948718px;line-height:16px;font-size:12.04px;color:#b9b9bf;-webkit-text-stroke:0.12px #b9b9bf">Apr 10 9:21:37.703 PM</span>
<span class="t m" style="left:835.6px;top:787.8948717948718px;line-height:16px;font-size:12.04px;color:#fff;-webkit-text-stroke:0.14px #fff">payment</span>
<span class="t m" style="left:995.5px;top:787.8948717948718px;line-height:16px;font-size:12.04px;color:#f27178;-webkit-text-stroke:0.12px #f27178">Error</span>
<span class="t m" style="left:1110.3px;top:787.8948717948718px;line-height:16px;font-size:12.04px;color:#fff;-webkit-text-stroke:0.14px #fff">0</span>
<span class="t m" style="left:1270.5px;top:787.8948717948718px;line-height:16px;font-size:12.04px;color:#fff;-webkit-text-stroke:0.14px #fff">Error: Visa cache full: cannot add new item.</span>
<svg class="i" style="left:634.3px;top:809.9846153846154px;width:17px;height:17px;" viewBox="0 0 24 24" fill="none" stroke="#bfc0c4" stroke-width="1.45" stroke-linecap="round" stroke-linejoin="round"><path d="M9 6l6 6l-6 6"/></svg>
<div class="b" style="left:655px;top:813.4846153846154px;width:1px;height:10px;background:#303032"></div>
<span class="t m" style="left:665.8px;top:810.4846153846154px;line-height:16px;font-size:12.04px;color:#b9b9bf;-webkit-text-stroke:0.12px #b9b9bf">Apr 10 9:21:37.694 PM</span>
<span class="t m" style="left:835.6px;top:810.4846153846154px;line-height:16px;font-size:12.04px;color:#fff;-webkit-text-stroke:0.14px #fff">payment</span>
<span class="t m" style="left:995.5px;top:810.4846153846154px;line-height:16px;font-size:12.04px;color:#f27178;-webkit-text-stroke:0.12px #f27178">Error</span>
<span class="t m" style="left:1110.3px;top:810.4846153846154px;line-height:16px;font-size:12.04px;color:#fff;-webkit-text-stroke:0.14px #fff">0</span>
<span class="t m" style="left:1270.5px;top:810.4846153846154px;line-height:16px;font-size:12.04px;color:#fff;-webkit-text-stroke:0.14px #fff">Error: Visa cache full: cannot add new item.</span>
<svg class="i" style="left:634.3px;top:832.574358974359px;width:17px;height:17px;" viewBox="0 0 24 24" fill="none" stroke="#bfc0c4" stroke-width="1.45" stroke-linecap="round" stroke-linejoin="round"><path d="M9 6l6 6l-6 6"/></svg>
<div class="b" style="left:655px;top:836.074358974359px;width:1px;height:10px;background:#303032"></div>
<span class="t m" style="left:665.8px;top:833.074358974359px;line-height:16px;font-size:12.04px;color:#b9b9bf;-webkit-text-stroke:0.12px #b9b9bf">Apr 10 9:21:36.708 PM</span>
<span class="t m" style="left:835.6px;top:833.074358974359px;line-height:16px;font-size:12.04px;color:#fff;-webkit-text-stroke:0.14px #fff">payment</span>
<span class="t m" style="left:995.5px;top:833.074358974359px;line-height:16px;font-size:12.04px;color:#f27178;-webkit-text-stroke:0.12px #f27178">Error</span>
<span class="t m" style="left:1110.3px;top:833.074358974359px;line-height:16px;font-size:12.04px;color:#fff;-webkit-text-stroke:0.14px #fff">0</span>
<span class="t m" style="left:1270.5px;top:833.074358974359px;line-height:16px;font-size:12.04px;color:#fff;-webkit-text-stroke:0.14px #fff">Error: Visa cache full: cannot add new item.</span>
<svg class="i" style="left:634.3px;top:855.1641025641026px;width:17px;height:17px;" viewBox="0 0 24 24" fill="none" stroke="#bfc0c4" stroke-width="1.45" stroke-linecap="round" stroke-linejoin="round"><path d="M9 6l6 6l-6 6"/></svg>
<div class="b" style="left:655px;top:858.6641025641026px;width:1px;height:10px;background:#303032"></div>
<span class="t m" style="left:665.8px;top:855.6641025641026px;line-height:16px;font-size:12.04px;color:#b9b9bf;-webkit-text-stroke:0.12px #b9b9bf">Apr 10 9:21:36.361 PM</span>
<span class="t m" style="left:835.6px;top:855.6641025641026px;line-height:16px;font-size:12.04px;color:#fff;-webkit-text-stroke:0.14px #fff">payment</span>
<span class="t m" style="left:995.5px;top:855.6641025641026px;line-height:16px;font-size:12.04px;color:#f27178;-webkit-text-stroke:0.12px #f27178">Error</span>
<span class="t m" style="left:1110.3px;top:855.6641025641026px;line-height:16px;font-size:12.04px;color:#fff;-webkit-text-stroke:0.14px #fff">0</span>
<span class="t m" style="left:1270.5px;top:855.6641025641026px;line-height:16px;font-size:12.04px;color:#fff;-webkit-text-stroke:0.14px #fff">Error: Visa cache full: cannot add new item.</span>
<svg class="i" style="left:634.3px;top:877.7538461538462px;width:17px;height:17px;" viewBox="0 0 24 24" fill="none" stroke="#bfc0c4" stroke-width="1.45" stroke-linecap="round" stroke-linejoin="round"><path d="M9 6l6 6l-6 6"/></svg>
<div class="b" style="left:655px;top:881.2538461538462px;width:1px;height:10px;background:#303032"></div>
<span class="t m" style="left:665.8px;top:878.2538461538462px;line-height:16px;font-size:12.04px;color:#b9b9bf;-webkit-text-stroke:0.12px #b9b9bf">Apr 10 9:21:36.114 PM</span>
<span class="t m" style="left:835.6px;top:878.2538461538462px;line-height:16px;font-size:12.04px;color:#fff;-webkit-text-stroke:0.14px #fff">payment</span>
<span class="t m" style="left:995.5px;top:878.2538461538462px;line-height:16px;font-size:12.04px;color:#f27178;-webkit-text-stroke:0.12px #f27178">Error</span>
<span class="t m" style="left:1110.3px;top:878.2538461538462px;line-height:16px;font-size:12.04px;color:#fff;-webkit-text-stroke:0.14px #fff">0</span>
<span class="t m" style="left:1270.5px;top:878.2538461538462px;line-height:16px;font-size:12.04px;color:#fff;-webkit-text-stroke:0.14px #fff">Error: Visa cache full: cannot add new item.</span>
<svg class="i" style="left:634.3px;top:900.3435897435899px;width:17px;height:17px;" viewBox="0 0 24 24" fill="none" stroke="#bfc0c4" stroke-width="1.45" stroke-linecap="round" stroke-linejoin="round"><path d="M9 6l6 6l-6 6"/></svg>
<div class="b" style="left:655px;top:903.8435897435899px;width:1px;height:10px;background:#303032"></div>
<span class="t m" style="left:665.8px;top:900.8435897435899px;line-height:16px;font-size:12.04px;color:#b9b9bf;-webkit-text-stroke:0.12px #b9b9bf">Apr 10 9:21:35.688 PM</span>
<span class="t m" style="left:835.6px;top:900.8435897435899px;line-height:16px;font-size:12.04px;color:#fff;-webkit-text-stroke:0.14px #fff">payment</span>
<span class="t m" style="left:995.5px;top:900.8435897435899px;line-height:16px;font-size:12.04px;color:#f27178;-webkit-text-stroke:0.12px #f27178">Error</span>
<span class="t m" style="left:1110.3px;top:900.8435897435899px;line-height:16px;font-size:12.04px;color:#fff;-webkit-text-stroke:0.14px #fff">0</span>
<span class="t m" style="left:1270.5px;top:900.8435897435899px;line-height:16px;font-size:12.04px;color:#fff;-webkit-text-stroke:0.14px #fff">Error: Visa cache full: cannot add new item.</span>
<svg class="i" style="left:634.3px;top:922.9333333333334px;width:17px;height:17px;" viewBox="0 0 24 24" fill="none" stroke="#bfc0c4" stroke-width="1.45" stroke-linecap="round" stroke-linejoin="round"><path d="M9 6l6 6l-6 6"/></svg>
<div class="b" style="left:655px;top:926.4333333333334px;width:1px;height:10px;background:#303032"></div>
<span class="t m" style="left:665.8px;top:923.4333333333334px;line-height:16px;font-size:12.04px;color:#b9b9bf;-webkit-text-stroke:0.12px #b9b9bf">Apr 10 9:21:35.604 PM</span>
<span class="t m" style="left:835.6px;top:923.4333333333334px;line-height:16px;font-size:12.04px;color:#fff;-webkit-text-stroke:0.14px #fff">payment</span>
<span class="t m" style="left:995.5px;top:923.4333333333334px;line-height:16px;font-size:12.04px;color:#f27178;-webkit-text-stroke:0.12px #f27178">Error</span>
<span class="t m" style="left:1110.3px;top:923.4333333333334px;line-height:16px;font-size:12.04px;color:#fff;-webkit-text-stroke:0.14px #fff">0</span>
<span class="t m" style="left:1270.5px;top:923.4333333333334px;line-height:16px;font-size:12.04px;color:#fff;-webkit-text-stroke:0.14px #fff">Error: Visa cache full: cannot add new item.</span>
<svg class="i" style="left:634.3px;top:945.5230769230769px;width:17px;height:17px;" viewBox="0 0 24 24" fill="none" stroke="#bfc0c4" stroke-width="1.45" stroke-linecap="round" stroke-linejoin="round"><path d="M9 6l6 6l-6 6"/></svg>
<div class="b" style="left:655px;top:949.0230769230769px;width:1px;height:10px;background:#303032"></div>
<span class="t m" style="left:665.8px;top:946.0230769230769px;line-height:16px;font-size:12.04px;color:#b9b9bf;-webkit-text-stroke:0.12px #b9b9bf">Apr 10 9:21:35.594 PM</span>
<span class="t m" style="left:835.6px;top:946.0230769230769px;line-height:16px;font-size:12.04px;color:#fff;-webkit-text-stroke:0.14px #fff">payment</span>
<span class="t m" style="left:995.5px;top:946.0230769230769px;line-height:16px;font-size:12.04px;color:#f27178;-webkit-text-stroke:0.12px #f27178">Error</span>
<span class="t m" style="left:1110.3px;top:946.0230769230769px;line-height:16px;font-size:12.04px;color:#fff;-webkit-text-stroke:0.14px #fff">0</span>
<span class="t m" style="left:1270.5px;top:946.0230769230769px;line-height:16px;font-size:12.04px;color:#fff;-webkit-text-stroke:0.14px #fff">Error: Visa cache full: cannot add new item.</span>
<svg class="i" style="left:634.3px;top:968.1128205128206px;width:17px;height:17px;" viewBox="0 0 24 24" fill="none" stroke="#bfc0c4" stroke-width="1.45" stroke-linecap="round" stroke-linejoin="round"><path d="M9 6l6 6l-6 6"/></svg>
<div class="b" style="left:655px;top:971.6128205128206px;width:1px;height:10px;background:#303032"></div>
<span class="t m" style="left:665.8px;top:968.6128205128206px;line-height:16px;font-size:12.04px;color:#b9b9bf;-webkit-text-stroke:0.12px #b9b9bf">Apr 10 9:21:35.539 PM</span>
<span class="t m" style="left:835.6px;top:968.6128205128206px;line-height:16px;font-size:12.04px;color:#fff;-webkit-text-stroke:0.14px #fff">payment</span>
<span class="t m" style="left:995.5px;top:968.6128205128206px;line-height:16px;font-size:12.04px;color:#f27178;-webkit-text-stroke:0.12px #f27178">Error</span>
<span class="t m" style="left:1110.3px;top:968.6128205128206px;line-height:16px;font-size:12.04px;color:#fff;-webkit-text-stroke:0.14px #fff">0</span>
<span class="t m" style="left:1270.5px;top:968.6128205128206px;line-height:16px;font-size:12.04px;color:#fff;-webkit-text-stroke:0.14px #fff">Error: Visa cache full: cannot add new item.</span>
<svg class="i" style="left:634.3px;top:990.7025641025642px;width:17px;height:17px;" viewBox="0 0 24 24" fill="none" stroke="#bfc0c4" stroke-width="1.45" stroke-linecap="round" stroke-linejoin="round"><path d="M9 6l6 6l-6 6"/></svg>
<div class="b" style="left:655px;top:994.2025641025642px;width:1px;height:10px;background:#303032"></div>
<span class="t m" style="left:665.8px;top:991.2025641025642px;line-height:16px;font-size:12.04px;color:#b9b9bf;-webkit-text-stroke:0.12px #b9b9bf">Apr 10 9:21:35.489 PM</span>
<span class="t m" style="left:835.6px;top:991.2025641025642px;line-height:16px;font-size:12.04px;color:#fff;-webkit-text-stroke:0.14px #fff">payment</span>
<span class="t m" style="left:995.5px;top:991.2025641025642px;line-height:16px;font-size:12.04px;color:#f27178;-webkit-text-stroke:0.12px #f27178">Error</span>
<span class="t m" style="left:1110.3px;top:991.2025641025642px;line-height:16px;font-size:12.04px;color:#fff;-webkit-text-stroke:0.14px #fff">0</span>
<span class="t m" style="left:1270.5px;top:991.2025641025642px;line-height:16px;font-size:12.04px;color:#fff;-webkit-text-stroke:0.14px #fff">Error: Visa cache full: cannot add new item.</span>
<svg class="i" style="left:634.3px;top:1013.2923076923078px;width:17px;height:17px;" viewBox="0 0 24 24" fill="none" stroke="#bfc0c4" stroke-width="1.45" stroke-linecap="round" stroke-linejoin="round"><path d="M9 6l6 6l-6 6"/></svg>
<div class="b" style="left:655px;top:1016.7923076923078px;width:1px;height:10px;background:#303032"></div>
<span class="t m" style="left:665.8px;top:1013.7923076923078px;line-height:16px;font-size:12.04px;color:#b9b9bf;-webkit-text-stroke:0.12px #b9b9bf">Apr 10 9:21:35.479 PM</span>
<span class="t m" style="left:835.6px;top:1013.7923076923078px;line-height:16px;font-size:12.04px;color:#fff;-webkit-text-stroke:0.14px #fff">payment</span>
<span class="t m" style="left:995.5px;top:1013.7923076923078px;line-height:16px;font-size:12.04px;color:#f27178;-webkit-text-stroke:0.12px #f27178">Error</span>
<span class="t m" style="left:1110.3px;top:1013.7923076923078px;line-height:16px;font-size:12.04px;color:#fff;-webkit-text-stroke:0.14px #fff">0</span>
<span class="t m" style="left:1270.5px;top:1013.7923076923078px;line-height:16px;font-size:12.04px;color:#fff;-webkit-text-stroke:0.14px #fff">Error: Visa cache full: cannot add new item.</span>
<svg class="i" style="left:634.3px;top:1035.8820512820512px;width:17px;height:17px;" viewBox="0 0 24 24" fill="none" stroke="#bfc0c4" stroke-width="1.45" stroke-linecap="round" stroke-linejoin="round"><path d="M9 6l6 6l-6 6"/></svg>
<div class="b" style="left:655px;top:1039.3820512820512px;width:1px;height:10px;background:#303032"></div>
<span class="t m" style="left:665.8px;top:1036.3820512820512px;line-height:16px;font-size:12.04px;color:#b9b9bf;-webkit-text-stroke:0.12px #b9b9bf">Apr 10 9:21:35.467 PM</span>
<span class="t m" style="left:835.6px;top:1036.3820512820512px;line-height:16px;font-size:12.04px;color:#fff;-webkit-text-stroke:0.14px #fff">payment</span>
<span class="t m" style="left:995.5px;top:1036.3820512820512px;line-height:16px;font-size:12.04px;color:#f27178;-webkit-text-stroke:0.12px #f27178">Error</span>
<span class="t m" style="left:1110.3px;top:1036.3820512820512px;line-height:16px;font-size:12.04px;color:#fff;-webkit-text-stroke:0.14px #fff">0</span>
<span class="t m" style="left:1270.5px;top:1036.3820512820512px;line-height:16px;font-size:12.04px;color:#fff;-webkit-text-stroke:0.14px #fff">Error: Visa cache full: cannot add new item.</span>
<svg class="i" style="left:634.3px;top:1058.4717948717948px;width:17px;height:17px;" viewBox="0 0 24 24" fill="none" stroke="#bfc0c4" stroke-width="1.45" stroke-linecap="round" stroke-linejoin="round"><path d="M9 6l6 6l-6 6"/></svg>
<div class="b" style="left:655px;top:1061.9717948717948px;width:1px;height:10px;background:#303032"></div>
<span class="t m" style="left:665.8px;top:1058.9717948717948px;line-height:16px;font-size:12.04px;color:#b9b9bf;-webkit-text-stroke:0.12px #b9b9bf">Apr 10 9:21:35.437 PM</span>
<span class="t m" style="left:835.6px;top:1058.9717948717948px;line-height:16px;font-size:12.04px;color:#fff;-webkit-text-stroke:0.14px #fff">payment</span>
<span class="t m" style="left:995.5px;top:1058.9717948717948px;line-height:16px;font-size:12.04px;color:#f27178;-webkit-text-stroke:0.12px #f27178">Error</span>
<span class="t m" style="left:1110.3px;top:1058.9717948717948px;line-height:16px;font-size:12.04px;color:#fff;-webkit-text-stroke:0.14px #fff">0</span>
<span class="t m" style="left:1270.5px;top:1058.9717948717948px;line-height:16px;font-size:12.04px;color:#fff;-webkit-text-stroke:0.14px #fff">Error: Visa cache full: cannot add new item.</span>
<svg class="i" style="left:634.3px;top:1081.0615384615385px;width:17px;height:17px;" viewBox="0 0 24 24" fill="none" stroke="#bfc0c4" stroke-width="1.45" stroke-linecap="round" stroke-linejoin="round"><path d="M9 6l6 6l-6 6"/></svg>
<div class="b" style="left:655px;top:1084.5615384615385px;width:1px;height:10px;background:#303032"></div>
<span class="t m" style="left:665.8px;top:1081.5615384615385px;line-height:16px;font-size:12.04px;color:#b9b9bf;-webkit-text-stroke:0.12px #b9b9bf">Apr 10 9:21:35.401 PM</span>
<span class="t m" style="left:835.6px;top:1081.5615384615385px;line-height:16px;font-size:12.04px;color:#fff;-webkit-text-stroke:0.14px #fff">payment</span>
<span class="t m" style="left:995.5px;top:1081.5615384615385px;line-height:16px;font-size:12.04px;color:#f27178;-webkit-text-stroke:0.12px #f27178">Error</span>
<span class="t m" style="left:1110.3px;top:1081.5615384615385px;line-height:16px;font-size:12.04px;color:#fff;-webkit-text-stroke:0.14px #fff">0</span>
<span class="t m" style="left:1270.5px;top:1081.5615384615385px;line-height:16px;font-size:12.04px;color:#fff;-webkit-text-stroke:0.14px #fff">Error: Visa cache full: cannot add new item.</span>
<svg class="i" style="left:634.3px;top:1103.6512820512821px;width:17px;height:17px;" viewBox="0 0 24 24" fill="none" stroke="#bfc0c4" stroke-width="1.45" stroke-linecap="round" stroke-linejoin="round"><path d="M9 6l6 6l-6 6"/></svg>
<div class="b" style="left:655px;top:1107.1512820512821px;width:1px;height:10px;background:#303032"></div>
<span class="t m" style="left:665.8px;top:1104.1512820512821px;line-height:16px;font-size:12.04px;color:#b9b9bf;-webkit-text-stroke:0.12px #b9b9bf">Apr 10 9:21:35.392 PM</span>
<span class="t m" style="left:835.6px;top:1104.1512820512821px;line-height:16px;font-size:12.04px;color:#fff;-webkit-text-stroke:0.14px #fff">payment</span>
<span class="t m" style="left:995.5px;top:1104.1512820512821px;line-height:16px;font-size:12.04px;color:#f27178;-webkit-text-stroke:0.12px #f27178">Error</span>
<span class="t m" style="left:1110.3px;top:1104.1512820512821px;line-height:16px;font-size:12.04px;color:#fff;-webkit-text-stroke:0.14px #fff">0</span>
<span class="t m" style="left:1270.5px;top:1104.1512820512821px;line-height:16px;font-size:12.04px;color:#fff;-webkit-text-stroke:0.14px #fff">Error: Visa cache full: cannot add new item.</span>
<svg class="i" style="left:634.3px;top:1126.2410256410258px;width:17px;height:17px;" viewBox="0 0 24 24" fill="none" stroke="#bfc0c4" stroke-width="1.45" stroke-linecap="round" stroke-linejoin="round"><path d="M9 6l6 6l-6 6"/></svg>
<div class="b" style="left:655px;top:1129.7410256410258px;width:1px;height:10px;background:#303032"></div>
<span class="t m" style="left:665.8px;top:1126.7410256410258px;line-height:16px;font-size:12.04px;color:#b9b9bf;-webkit-text-stroke:0.12px #b9b9bf">Apr 10 9:21:35.241 PM</span>
<span class="t m" style="left:835.6px;top:1126.7410256410258px;line-height:16px;font-size:12.04px;color:#fff;-webkit-text-stroke:0.14px #fff">payment</span>
<span class="t m" style="left:995.5px;top:1126.7410256410258px;line-height:16px;font-size:12.04px;color:#f27178;-webkit-text-stroke:0.12px #f27178">Error</span>
<span class="t m" style="left:1110.3px;top:1126.7410256410258px;line-height:16px;font-size:12.04px;color:#fff;-webkit-text-stroke:0.14px #fff">0</span>
<span class="t m" style="left:1270.5px;top:1126.7410256410258px;line-height:16px;font-size:12.04px;color:#fff;-webkit-text-stroke:0.14px #fff">Error: Visa cache full: cannot add new item.</span>
<svg class="i" style="left:634.3px;top:1148.8307692307694px;width:17px;height:17px;" viewBox="0 0 24 24" fill="none" stroke="#bfc0c4" stroke-width="1.45" stroke-linecap="round" stroke-linejoin="round"><path d="M9 6l6 6l-6 6"/></svg>
<div class="b" style="left:655px;top:1152.3307692307694px;width:1px;height:10px;background:#303032"></div>
<span class="t m" style="left:665.8px;top:1149.3307692307694px;line-height:16px;font-size:12.04px;color:#b9b9bf;-webkit-text-stroke:0.12px #b9b9bf">Apr 10 9:21:35.233 PM</span>
<span class="t m" style="left:835.6px;top:1149.3307692307694px;line-height:16px;font-size:12.04px;color:#fff;-webkit-text-stroke:0.14px #fff">payment</span>
<span class="t m" style="left:995.5px;top:1149.3307692307694px;line-height:16px;font-size:12.04px;color:#f27178;-webkit-text-stroke:0.12px #f27178">Error</span>
<span class="t m" style="left:1110.3px;top:1149.3307692307694px;line-height:16px;font-size:12.04px;color:#fff;-webkit-text-stroke:0.14px #fff">0</span>
<span class="t m" style="left:1270.5px;top:1149.3307692307694px;line-height:16px;font-size:12.04px;color:#fff;-webkit-text-stroke:0.14px #fff">Error: Visa cache full: cannot add new item.</span>
<svg class="i" style="left:634.3px;top:1171.420512820513px;width:17px;height:17px;" viewBox="0 0 24 24" fill="none" stroke="#bfc0c4" stroke-width="1.45" stroke-linecap="round" stroke-linejoin="round"><path d="M9 6l6 6l-6 6"/></svg>
<div class="b" style="left:655px;top:1174.920512820513px;width:1px;height:10px;background:#303032"></div>
<span class="t m" style="left:665.8px;top:1171.920512820513px;line-height:16px;font-size:12.04px;color:#b9b9bf;-webkit-text-stroke:0.12px #b9b9bf">Apr 10 9:21:35.174 PM</span>
<span class="t m" style="left:835.6px;top:1171.920512820513px;line-height:16px;font-size:12.04px;color:#fff;-webkit-text-stroke:0.14px #fff">payment</span>
<span class="t m" style="left:995.5px;top:1171.920512820513px;line-height:16px;font-size:12.04px;color:#f27178;-webkit-text-stroke:0.12px #f27178">Error</span>
<span class="t m" style="left:1110.3px;top:1171.920512820513px;line-height:16px;font-size:12.04px;color:#fff;-webkit-text-stroke:0.14px #fff">0</span>
<span class="t m" style="left:1270.5px;top:1171.920512820513px;line-height:16px;font-size:12.04px;color:#fff;-webkit-text-stroke:0.14px #fff">Error: Visa cache full: cannot add new item.</span>
<svg class="i" style="left:634.3px;top:1194.0102564102565px;width:17px;height:17px;" viewBox="0 0 24 24" fill="none" stroke="#bfc0c4" stroke-width="1.45" stroke-linecap="round" stroke-linejoin="round"><path d="M9 6l6 6l-6 6"/></svg>
<div class="b" style="left:655px;top:1197.5102564102565px;width:1px;height:10px;background:#303032"></div>
<span class="t m" style="left:665.8px;top:1194.5102564102565px;line-height:16px;font-size:12.04px;color:#b9b9bf;-webkit-text-stroke:0.12px #b9b9bf">Apr 10 9:21:35.149 PM</span>
<span class="t m" style="left:835.6px;top:1194.5102564102565px;line-height:16px;font-size:12.04px;color:#fff;-webkit-text-stroke:0.14px #fff">payment</span>
<span class="t m" style="left:995.5px;top:1194.5102564102565px;line-height:16px;font-size:12.04px;color:#f27178;-webkit-text-stroke:0.12px #f27178">Error</span>
<span class="t m" style="left:1110.3px;top:1194.5102564102565px;line-height:16px;font-size:12.04px;color:#fff;-webkit-text-stroke:0.14px #fff">0</span>
<span class="t m" style="left:1270.5px;top:1194.5102564102565px;line-height:16px;font-size:12.04px;color:#fff;-webkit-text-stroke:0.14px #fff">Error: Visa cache full: cannot add new item.</span>
<svg class="i" style="left:634.3px;top:1216.6px;width:17px;height:17px;" viewBox="0 0 24 24" fill="none" stroke="#bfc0c4" stroke-width="1.45" stroke-linecap="round" stroke-linejoin="round"><path d="M9 6l6 6l-6 6"/></svg>
<div class="b" style="left:655px;top:1220.1px;width:1px;height:10px;background:#303032"></div>
<span class="t m" style="left:665.8px;top:1217.1px;line-height:16px;font-size:12.04px;color:#b9b9bf;-webkit-text-stroke:0.12px #b9b9bf">Apr 10 9:21:35.141 PM</span>
<span class="t m" style="left:835.6px;top:1217.1px;line-height:16px;font-size:12.04px;color:#fff;-webkit-text-stroke:0.14px #fff">payment</span>
<span class="t m" style="left:995.5px;top:1217.1px;line-height:16px;font-size:12.04px;color:#f27178;-webkit-text-stroke:0.12px #f27178">Error</span>
<span class="t m" style="left:1110.3px;top:1217.1px;line-height:16px;font-size:12.04px;color:#fff;-webkit-text-stroke:0.14px #fff">0</span>
<span class="t m" style="left:1270.5px;top:1217.1px;line-height:16px;font-size:12.04px;color:#fff;-webkit-text-stroke:0.14px #fff">Error: Visa cache full: cannot add new item.</span>
</div>
</body></html>
